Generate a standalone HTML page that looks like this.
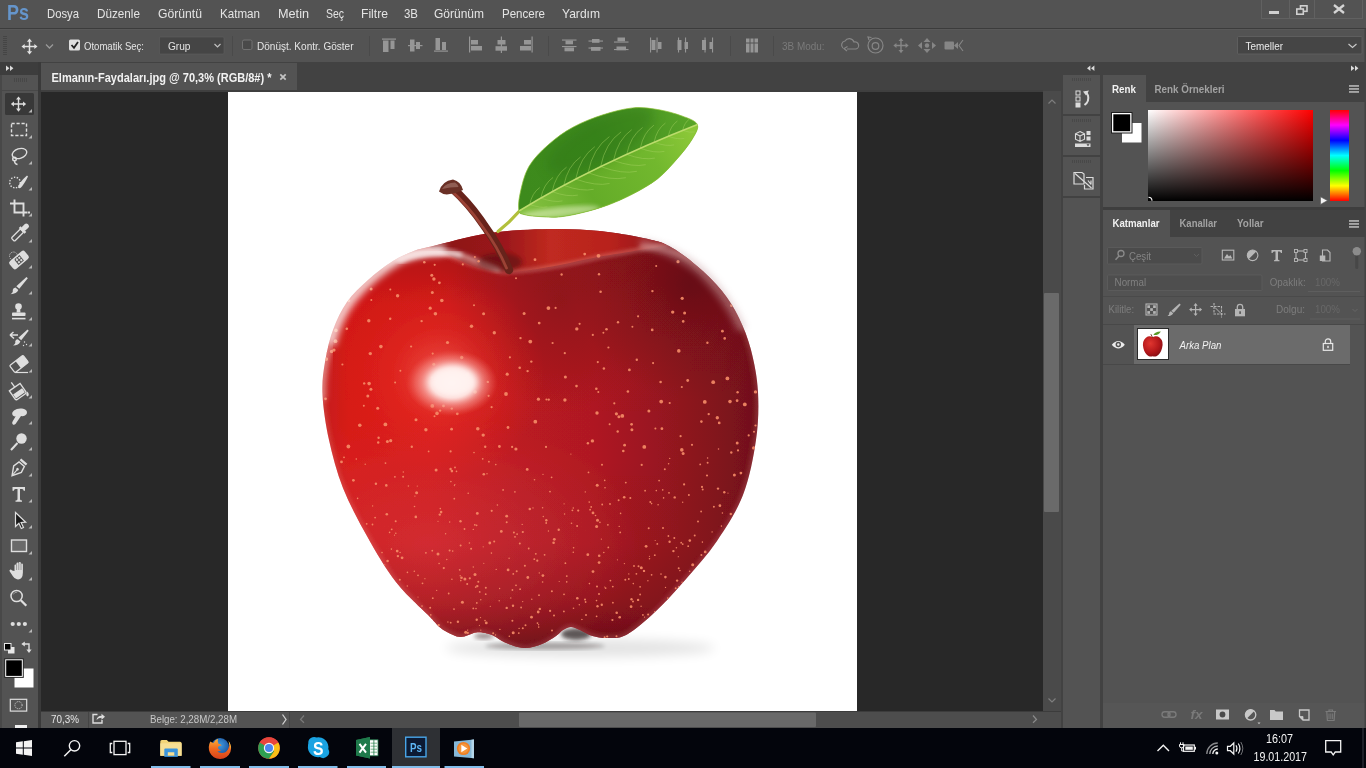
<!DOCTYPE html>
<html><head><meta charset="utf-8">
<style>
*{box-sizing:border-box;margin:0;padding:0}
html,body{width:1366px;height:768px;overflow:hidden;background:#535353;font-family:"Liberation Sans",sans-serif;color:#ddd;font-size:12px}
.abs{position:absolute}
svg{position:absolute;overflow:visible;will-change:transform}
svg text{font-family:"Liberation Sans",sans-serif}
#menubar{left:0;top:0;width:1366px;height:28px;background:#535353}
#optbar{left:0;top:28px;width:1366px;height:34px;background:#535353;border-top:1px solid #3c3c3c;box-shadow:inset 0 1px 0 #595959}
#tabbar{left:38px;top:62px;width:1023px;height:29px;background:#424242}
#tab{left:41px;top:63px;width:256px;height:27px;background:#535353}
#canvasbg{left:41px;top:90px;width:1002px;height:621px;background:#282828;border-top:2px solid #3f3f3f}
#doc{left:228px;top:92px;width:629px;height:619px;background:#fff;overflow:hidden}
#tools{left:0;top:62px;width:38px;height:666px;background:#535353}
#statusbar{left:41px;top:711px;width:1020px;height:17px;background:#535353}
#taskbar{left:0;top:728px;width:1366px;height:40px;background:#04070f}
#vscroll{left:1043px;top:91px;width:18px;height:620px;background:#4a4a4a}
#dock{left:1061px;top:62px;width:305px;height:666px;background:#424242}
#iconcol{left:1063px;top:75px;width:37px;height:653px;background:#535353}
#rpanel{left:1103px;top:75px;width:263px;height:653px;background:#535353}
</style></head><body>
<div class="abs" id="tabbar"></div>
<div class="abs" id="tab"></div>
<div class="abs" id="canvasbg"></div>
<div class="abs" id="doc"></div>
<div class="abs" id="tools"></div>
<div class="abs" id="statusbar"></div>
<div class="abs" id="vscroll"></div>
<div class="abs" id="dock"></div>
<div class="abs" id="iconcol"></div>
<div class="abs" id="rpanel"></div>
<div class="abs" id="taskbar"></div>
<div class="abs" id="optbar"></div>
<div class="abs" id="menubar"><svg style="left:0;top:0" width="1366" height="28"><text x="7" y="19.6" font-size="22" fill="#6595cb" font-weight="bold" font-style="normal" textLength="22" lengthAdjust="spacingAndGlyphs">Ps</text><text x="47" y="18" font-size="13" fill="#e4e4e4" font-weight="normal" font-style="normal" textLength="32" lengthAdjust="spacingAndGlyphs">Dosya</text><text x="97" y="18" font-size="13" fill="#e4e4e4" font-weight="normal" font-style="normal" textLength="43" lengthAdjust="spacingAndGlyphs">Düzenle</text><text x="158" y="18" font-size="13" fill="#e4e4e4" font-weight="normal" font-style="normal" textLength="44" lengthAdjust="spacingAndGlyphs">Görüntü</text><text x="220" y="18" font-size="13" fill="#e4e4e4" font-weight="normal" font-style="normal" textLength="40" lengthAdjust="spacingAndGlyphs">Katman</text><text x="278" y="18" font-size="13" fill="#e4e4e4" font-weight="normal" font-style="normal" textLength="31" lengthAdjust="spacingAndGlyphs">Metin</text><text x="326" y="18" font-size="13" fill="#e4e4e4" font-weight="normal" font-style="normal" textLength="18" lengthAdjust="spacingAndGlyphs">Seç</text><text x="361" y="18" font-size="13" fill="#e4e4e4" font-weight="normal" font-style="normal" textLength="27" lengthAdjust="spacingAndGlyphs">Filtre</text><text x="404" y="18" font-size="13" fill="#e4e4e4" font-weight="normal" font-style="normal" textLength="14" lengthAdjust="spacingAndGlyphs">3B</text><text x="434" y="18" font-size="13" fill="#e4e4e4" font-weight="normal" font-style="normal" textLength="50" lengthAdjust="spacingAndGlyphs">Görünüm</text><text x="502" y="18" font-size="13" fill="#e4e4e4" font-weight="normal" font-style="normal" textLength="43" lengthAdjust="spacingAndGlyphs">Pencere</text><text x="562" y="18" font-size="13" fill="#e4e4e4" font-weight="normal" font-style="normal" textLength="38" lengthAdjust="spacingAndGlyphs">Yardım</text></svg>
<div class="abs" style="left:1261px;top:0;width:102px;height:19px;border:1px solid #616161;border-top:0"></div>
<div class="abs" style="left:1289px;top:0;width:1px;height:18px;background:#616161"></div>
<div class="abs" style="left:1314px;top:0;width:1px;height:18px;background:#616161"></div>
<div class="abs" style="left:1269px;top:11px;width:10px;height:3px;background:#cfcfcf"></div>
<svg style="left:1295px;top:4px" width="14" height="12" viewBox="0 0 14 12"><rect x="5.5" y="1.8" width="6.5" height="5.5" fill="none" stroke="#cfcfcf" stroke-width="1.6"/><rect x="1.8" y="5" width="6.5" height="5.2" fill="#535353" stroke="#cfcfcf" stroke-width="1.6"/></svg>
<svg style="left:1332px;top:4px" width="14" height="10" viewBox="0 0 14 10"><path d="M2 1 L12 9 M12 1 L2 9" stroke="#d4d4d4" stroke-width="2.3" fill="none"/></svg>
</div><svg style="left:0;top:0" width="1366" height="62"><rect x="3" y="36" width="4" height="1" fill="#454545"/><rect x="3" y="38" width="4" height="1" fill="#454545"/><rect x="3" y="40" width="4" height="1" fill="#454545"/><rect x="3" y="42" width="4" height="1" fill="#454545"/><rect x="3" y="44" width="4" height="1" fill="#454545"/><rect x="3" y="46" width="4" height="1" fill="#454545"/><rect x="3" y="48" width="4" height="1" fill="#454545"/><rect x="3" y="50" width="4" height="1" fill="#454545"/><rect x="3" y="52" width="4" height="1" fill="#454545"/><rect x="3" y="54" width="4" height="1" fill="#454545"/><path d="M23.0,46.5 H36.0 M29.5,40.0 V53.0" stroke="#e2e2e2" stroke-width="1.5" fill="none"/><polygon points="37.5,46.5 34.3,43.9 34.3,49.1" fill="#e2e2e2"/><polygon points="21.5,46.5 24.7,43.9 24.7,49.1" fill="#e2e2e2"/><polygon points="29.5,54.5 26.9,51.3 32.1,51.3" fill="#e2e2e2"/><polygon points="29.5,38.5 26.9,41.7 32.1,41.7" fill="#e2e2e2"/><path d="M46,44.5 L49.5,48 L53,44.5" stroke="#9a9a9a" stroke-width="1.3" fill="none"/><rect x="69" y="39.5" width="11" height="11" rx="1.5" fill="#dedede"/><path d="M71.5,45 L74,47.8 L78,42" stroke="#222" stroke-width="1.8" fill="none"/><text x="84" y="49.8" font-size="11.5" fill="#e4e4e4" font-weight="normal" font-style="normal" textLength="60" lengthAdjust="spacingAndGlyphs">Otomatik Seç:</text><rect x="159.5" y="37" width="64.5" height="17" rx="1" fill="#454545" stroke="#606060" stroke-width="0.6"/><text x="168" y="49.8" font-size="11.5" fill="#e4e4e4" font-weight="normal" font-style="normal" textLength="22.5" lengthAdjust="spacingAndGlyphs">Grup</text><path d="M214.5,44 L217.5,47 L220.5,44" stroke="#c0c0c0" stroke-width="1.2" fill="none"/><rect x="232" y="36" width="1" height="20" fill="#4a4a4a"/><rect x="242.5" y="40" width="9.5" height="9.5" rx="1.5" fill="#4a4a4a" stroke="#727272" stroke-width="1"/><text x="257" y="49.8" font-size="11.5" fill="#e4e4e4" font-weight="normal" font-style="normal" textLength="96.5" lengthAdjust="spacingAndGlyphs">Dönüşt. Kontr. Göster</text><rect x="369" y="36" width="1" height="20" fill="#4a4a4a"/><rect x="382" y="38.5" width="14" height="1.2" fill="#969696"/><rect x="383" y="40.5" width="5.5" height="11.5" fill="#969696"/><rect x="390.5" y="40.5" width="4" height="8.5" fill="#969696"/><rect x="408" y="45" width="14.5" height="1.2" fill="#969696"/><rect x="410" y="39.5" width="4.5" height="12" fill="#969696"/><rect x="416" y="42" width="4" height="7" fill="#969696"/><rect x="434" y="50.5" width="14" height="1.2" fill="#969696"/><rect x="435.5" y="38" width="4.5" height="12" fill="#969696"/><rect x="442" y="42" width="4" height="8" fill="#969696"/><rect x="469" y="36.5" width="1.2" height="16" fill="#969696"/><rect x="471" y="40" width="7" height="4.5" fill="#969696"/><rect x="471" y="46" width="11" height="4.5" fill="#969696"/><rect x="500.8" y="36.5" width="1.2" height="16.5" fill="#969696"/><rect x="497.5" y="40" width="8" height="4.5" fill="#969696"/><rect x="495.5" y="46.2" width="11.5" height="4.5" fill="#969696"/><rect x="531.5" y="36.5" width="1.2" height="16" fill="#969696"/><rect x="524" y="40" width="7" height="4.5" fill="#969696"/><rect x="520" y="46" width="11" height="4.5" fill="#969696"/><rect x="548" y="36" width="1" height="20" fill="#4a4a4a"/><rect x="562" y="39.5" width="14.5" height="1.1" fill="#969696"/><rect x="562" y="46.0" width="14.5" height="1.1" fill="#969696"/><rect x="565.5" y="40.5" width="7.5" height="3.8" fill="#969696"/><rect x="564.5" y="47.5" width="9.5" height="3.8" fill="#969696"/><rect x="588.5" y="40.5" width="14.5" height="1.1" fill="#969696"/><rect x="588.5" y="47.5" width="14.5" height="1.1" fill="#969696"/><rect x="592.0" y="39.0" width="7.5" height="3.8" fill="#969696"/><rect x="591.0" y="47.0" width="9.5" height="3.8" fill="#969696"/><rect x="614" y="41.5" width="14.5" height="1.1" fill="#969696"/><rect x="614" y="49.0" width="14.5" height="1.1" fill="#969696"/><rect x="617.5" y="37.5" width="7.5" height="3.8" fill="#969696"/><rect x="616.5" y="46.5" width="9.5" height="3.8" fill="#969696"/><rect x="650" y="37.5" width="1.1" height="15" fill="#969696"/><rect x="656.5" y="37.5" width="1.1" height="15" fill="#969696"/><rect x="651.5" y="40" width="4" height="10" fill="#969696"/><rect x="658.0" y="42" width="3.5" height="7" fill="#969696"/><rect x="678" y="37.5" width="1.1" height="15" fill="#969696"/><rect x="685.0" y="37.5" width="1.1" height="15" fill="#969696"/><rect x="677.5" y="40" width="4" height="10" fill="#969696"/><rect x="684.5" y="42" width="3.5" height="7" fill="#969696"/><rect x="704.5" y="37.5" width="1.1" height="15" fill="#969696"/><rect x="712.0" y="37.5" width="1.1" height="15" fill="#969696"/><rect x="702.0" y="40" width="4" height="10" fill="#969696"/><rect x="709.5" y="42" width="3.5" height="7" fill="#969696"/><rect x="730" y="36" width="1" height="20" fill="#4a4a4a"/><rect x="746" y="38.5" width="3.5" height="4" fill="#969696"/><rect x="750.5" y="38.5" width="3" height="4" fill="#969696"/><rect x="754.5" y="38.5" width="3.5" height="4" fill="#969696"/><rect x="746" y="43.5" width="3.5" height="9" fill="#969696"/><rect x="750.5" y="43.5" width="3" height="9" fill="#969696"/><rect x="754.5" y="43.5" width="3.5" height="9" fill="#969696"/><rect x="773" y="36" width="1" height="20" fill="#4a4a4a"/><text x="782" y="50" font-size="11.5" fill="#7a7a7a" font-weight="normal" font-style="normal" textLength="42.5" lengthAdjust="spacingAndGlyphs">3B Modu:</text><g fill="none" stroke="#868686" stroke-width="1.2"><path d="M843,48 a4,4 0 0 1 2,-7 a5,5 0 0 1 9,1 a3.5,3.5 0 0 1 2,7 h-9"/><path d="M847,51 l-3,-2.5 l3.5,-2"/><circle cx="875.5" cy="45.5" r="7.5"/><circle cx="875.5" cy="46" r="3.3"/><path d="M869,40 l-1,-3 l3.5,0.5"/></g><path d="M894.875,45.5 H907.125 M901,39.375 V51.625" stroke="#868686" stroke-width="1.4249999999999998" fill="none"/><polygon points="908.625,45.5 905.585,43.03 905.585,47.97" fill="#868686"/><polygon points="893.375,45.5 896.415,43.03 896.415,47.97" fill="#868686"/><polygon points="901.0,53.125 898.53,50.085 903.47,50.085" fill="#868686"/><polygon points="901.0,37.875 898.53,40.915 903.47,40.915" fill="#868686"/><g fill="#868686"><polygon points="927,38 930.5,42 923.5,42"/><polygon points="927,53 930.5,49 923.5,49"/><polygon points="918,45.5 922,42 922,49"/><polygon points="936,45.5 932,42 932,49"/><circle cx="927" cy="45.5" r="2.2"/></g><rect x="944.5" y="41.5" width="9.5" height="8" rx="1" fill="#868686"/><polygon points="954,45.5 958,42 958,49" fill="#868686"/><path d="M963,40 l-4,5.5 l4,5.5" stroke="#868686" stroke-width="1.1" fill="none"/><rect x="1237.5" y="36.5" width="124.5" height="17.5" rx="1" fill="#454545" stroke="#636363" stroke-width="0.8"/><text x="1245.5" y="49.5" font-size="11.5" fill="#eaeaea" font-weight="normal" font-style="normal" textLength="37.5" lengthAdjust="spacingAndGlyphs">Temeller</text><path d="M1348.5,44 L1352.5,47.5 L1356.5,44" stroke="#c8c8c8" stroke-width="1.2" fill="none"/></svg><svg style="left:0;top:0" width="41" height="728"><rect x="0" y="62" width="38" height="13" fill="#3d3d3d"/><rect x="0" y="75" width="2" height="653" fill="#484848"/><rect x="38" y="62" width="3" height="666" fill="#3a3a3a"/><polygon points="9.4,68.3 6,65.5 6,71.1" fill="#dcdcdc"/><polygon points="13.4,68.3 10,65.5 10,71.1" fill="#dcdcdc"/><rect x="14" y="78" width="1" height="4" fill="#474747"/><rect x="16" y="78" width="1" height="4" fill="#474747"/><rect x="18" y="78" width="1" height="4" fill="#474747"/><rect x="20" y="78" width="1" height="4" fill="#474747"/><rect x="22" y="78" width="1" height="4" fill="#474747"/><rect x="24" y="78" width="1" height="4" fill="#474747"/><rect x="26" y="78" width="1" height="4" fill="#474747"/><rect x="2" y="90" width="36" height="1" fill="#484848"/><rect x="5" y="93" width="29" height="22" rx="1.5" fill="#383838"/><polygon points="32,109 32,112.5 28.5,112.5" fill="#b8b8b8"/><polygon points="32,135 32,138.5 28.5,138.5" fill="#b8b8b8"/><polygon points="32,161 32,164.5 28.5,164.5" fill="#b8b8b8"/><polygon points="32,187 32,190.5 28.5,190.5" fill="#b8b8b8"/><polygon points="32,213 32,216.5 28.5,216.5" fill="#b8b8b8"/><polygon points="32,239 32,242.5 28.5,242.5" fill="#b8b8b8"/><polygon points="32,265 32,268.5 28.5,268.5" fill="#b8b8b8"/><polygon points="32,291 32,294.5 28.5,294.5" fill="#b8b8b8"/><polygon points="32,317 32,320.5 28.5,320.5" fill="#b8b8b8"/><polygon points="32,343 32,346.5 28.5,346.5" fill="#b8b8b8"/><polygon points="32,369 32,372.5 28.5,372.5" fill="#b8b8b8"/><polygon points="32,395 32,398.5 28.5,398.5" fill="#b8b8b8"/><polygon points="32,421 32,424.5 28.5,424.5" fill="#b8b8b8"/><polygon points="32,447 32,450.5 28.5,450.5" fill="#b8b8b8"/><polygon points="32,473 32,476.5 28.5,476.5" fill="#b8b8b8"/><polygon points="32,499 32,502.5 28.5,502.5" fill="#b8b8b8"/><polygon points="32,525 32,528.5 28.5,528.5" fill="#b8b8b8"/><polygon points="32,551 32,554.5 28.5,554.5" fill="#b8b8b8"/><polygon points="32,577 32,580.5 28.5,580.5" fill="#b8b8b8"/><polygon points="32,629 32,632.5 28.5,632.5" fill="#b8b8b8"/><path d="M12.375,104 H24.625 M18.5,97.875 V110.125" stroke="#dedede" stroke-width="1.4249999999999998" fill="none"/><polygon points="26.125,104.0 23.085,101.53 23.085,106.47" fill="#dedede"/><polygon points="10.875,104.0 13.915,101.53 13.915,106.47" fill="#dedede"/><polygon points="18.5,111.625 16.03,108.585 20.97,108.585" fill="#dedede"/><polygon points="18.5,96.375 16.03,99.415 20.97,99.415" fill="#dedede"/><rect x="11.5" y="123.5" width="15" height="12" fill="none" stroke="#dedede" stroke-width="1.4" stroke-dasharray="3.2,1.8"/><g fill="none" stroke="#dedede" stroke-width="1.4"><ellipse cx="19.5" cy="153.5" rx="7.5" ry="4.8" transform="rotate(-18 19.5 153.5)"/><circle cx="14.5" cy="159" r="1.8"/><path d="M14.5,161 q0,3 3,3.5"/></g><circle cx="15" cy="182.500" r="5.3" fill="none" stroke="#dedede" stroke-width="1.4" stroke-dasharray="1.4,1.5"/><path d="M18,187.500 q1,-5 9,-12 l1,1 q-4,8 -7,11 q-1.500,1.500 -3,0z" fill="#dedede"/><path d="M14.500,199.500 V212.500 H27.500 M10,203.500 H23.500 V216.500" stroke="#dedede" stroke-width="1.9" fill="none"/><rect x="28" y="211.500" width="2" height="2" fill="#dedede"/><g transform="rotate(45 18.5 234)"><rect x="16.2" y="229" width="4.6" height="13" rx="1.2" fill="none" stroke="#dedede" stroke-width="1.3"/><rect x="14.5" y="227" width="8" height="2.6" fill="#dedede"/><rect x="16" y="220.500" width="5" height="7.500" rx="2" fill="#dedede"/></g><g transform="rotate(-40 19 260)"><rect x="9" y="255" width="20" height="10" rx="2.5" fill="#dedede"/><rect x="15.500" y="256.500" width="7" height="7" fill="#535353"/><rect x="16.6" y="257.600" width="2" height="2" fill="#dedede"/><rect x="19.6" y="257.600" width="2" height="2" fill="#dedede"/><rect x="16.6" y="260.600" width="2" height="2" fill="#dedede"/><rect x="19.6" y="260.600" width="2" height="2" fill="#dedede"/></g><circle cx="13.500" cy="256" r="4" fill="none" stroke="#dedede" stroke-width="1" stroke-dasharray="1,1.300"/><path d="M26.500,277 l1.300,1.300 l-8.500,10.500 l-3,-2.600z" fill="#dedede"/><path d="M15.500,287.500 l2.800,2.500 q-1.500,4 -7.800,4.200 q3,-2 2.200,-4.200 q0.500,-2.500 2.800,-2.500z" fill="#dedede"/><circle cx="18.500" cy="306.500" r="3.300" fill="#dedede"/><path d="M17,308 h3 l0.500,4.500 h-4z" fill="#dedede"/><rect x="12" y="312.500" width="13.500" height="3.600" rx="0.800" fill="#dedede"/><rect x="12" y="317.800" width="13.500" height="1.600" fill="#dedede"/><path d="M27.500,329.500 l1.200,1.200 l-7.500,9.500 l-2.800,-2.400z" fill="#dedede"/><path d="M17.800,339.300 l2.600,2.300 q-1.500,3.800 -7.400,4 q3,-2 2.200,-4 q0.400,-2.300 2.600,-2.300z" fill="#dedede"/><path d="M10,335 h8 M10,335 l3.500,-3 M14,338.500 l-4,-3.500" stroke="#dedede" stroke-width="1.500" fill="none"/><circle cx="24.500" cy="342" r="0.700" fill="#dedede"/><circle cx="26.500" cy="344.500" r="0.700" fill="#dedede"/><circle cx="23.500" cy="345.500" r="0.700" fill="#dedede"/><g transform="rotate(-38 19 364)"><rect x="10.500" y="359.500" width="17" height="9" rx="1.200" fill="none" stroke="#dedede" stroke-width="1.300"/><rect x="18" y="359.500" width="9.500" height="9" fill="#dedede"/></g><path d="M15,372.500 h13" stroke="#dedede" stroke-width="1.200"/><g transform="rotate(-35 18 391)"><path d="M11,386 h13 v10 q0,1.500 -1.500,1.500 h-10 q-1.500,0 -1.500,-1.500z" fill="none" stroke="#dedede" stroke-width="1.400"/><path d="M12,391 h11 v5 h-11z" fill="#dedede"/><path d="M17.500,386 v-6" stroke="#dedede" stroke-width="1.300"/></g><path d="M27.500,391.500 q2.500,3.500 0,5 q-2.500,-1.500 0,-5z" fill="#dedede"/><path d="M14,410.500 q3,-2.500 8,-2 q4.500,0.500 5,3.500 q0.300,2.500 -2,3.500 q-2,1 -4,0.500 l-5.500,8 q-1.500,1.500 -2.800,0.300 q-1.200,-1.200 0,-3 l3,-5 q-2,0.500 -3,-1 q-1.500,-2.500 1.300,-4.800z" fill="#dedede"/><circle cx="21.500" cy="438.500" r="5.200" fill="#dedede"/><path d="M17.500,443 l-6.500,7" stroke="#dedede" stroke-width="2"/><g transform="rotate(40 18.5 468)"><path d="M18.500,478 l-5,-8.500 l1.500,-6.500 h7 l1.500,6.500z" fill="none" stroke="#dedede" stroke-width="1.400"/><path d="M18.500,477 v-7" stroke="#dedede" stroke-width="1.100"/><circle cx="18.500" cy="469.500" r="1.300" fill="#dedede"/><rect x="14.500" y="459" width="8" height="2.400" fill="#dedede"/></g><path d="M12.500,487 h12.500 v3.800 h-1.300 q-0.200,-1.900 -1.700,-1.900 h-2 v10.300 q0,1.200 2,1.300 v1.300 h-6.500 v-1.300 q2,-0.100 2,-1.300 v-10.300 h-2 q-1.500,0 -1.700,1.900 h-1.300z" fill="#dedede"/><path d="M15.500,512.500 l0,14 l3.400,-3.200 l2.400,5.200 l2.200,-1 l-2.400,-5 l4.600,-0.300z" fill="#1a1a1a" stroke="#dedede" stroke-width="1.200"/><rect x="11.500" y="540" width="15" height="11.500" fill="#6a6a6a" stroke="#dedede" stroke-width="1.400"/><path d="M14.500,571 v-5.500 q0,-1 1,-1 q1,0 1,1 v-2 q0,-1 1.100,-1 q1.100,0 1.100,1 v-0.500 q0,-1 1.100,-1 q1.100,0 1.100,1 v1.500 q0,-1 1,-1 q1,0 1,1 v8 q0,3.500 -1.500,5.500 q-1.500,1.800 -4.500,1.300 q-2.500,-0.500 -4,-3 l-3.300,-5 q-0.500,-1.200 0.500,-1.600 q1,-0.400 2,0.800z" fill="#dedede"/><path d="M16.600,565 v5 M18.800,563 v7 M21,563.500 v6.500" stroke="#535353" stroke-width="0.500"/><circle cx="16.600" cy="596" r="5.600" fill="none" stroke="#dedede" stroke-width="1.500"/><path d="M20.800,600.300 l5.500,5.500" stroke="#dedede" stroke-width="2.300"/><path d="M13.200,594.500 q1.200,-2.600 4,-2.300" stroke="#a0a0a0" stroke-width="0.900" fill="none"/><circle cx="12.7" cy="624" r="2.100" fill="#dedede"/><circle cx="18.8" cy="624" r="2.100" fill="#dedede"/><circle cx="24.9" cy="624" r="2.100" fill="#dedede"/><rect x="8" y="647" width="6.500" height="6.500" fill="#e8e8e8"/><rect x="4.500" y="643.500" width="6.500" height="6.500" fill="#000" stroke="#e8e8e8" stroke-width="1"/><path d="M24,644 h5 v6.500" stroke="#dedede" stroke-width="1.400" fill="none"/><polygon points="21.300,644 24.800,641.400 24.800,646.600" fill="#dedede"/><polygon points="29,653 26.400,649.600 31.600,649.600" fill="#dedede"/><rect x="14.500" y="668.500" width="19" height="19" fill="#fff"/><rect x="4.200" y="658.300" width="19.600" height="19.600" fill="#2a2a2a"/><rect x="5.200" y="659.300" width="17.600" height="17.600" fill="#fff"/><rect x="6.200" y="660.300" width="15.600" height="15.600" fill="#000"/><rect x="10.300" y="699.300" width="16.400" height="11.800" fill="none" stroke="#dedede" stroke-width="1.200"/><circle cx="18.500" cy="705.200" r="3.600" fill="none" stroke="#dedede" stroke-width="1" stroke-dasharray="1,1.100"/><rect x="15" y="725" width="12" height="3" fill="#f0f0f0"/></svg><svg style="left:0;top:0" width="1366" height="728"><text x="51.5" y="82" font-size="12" fill="#f2f2f2" font-weight="bold" font-style="normal" textLength="220" lengthAdjust="spacingAndGlyphs">Elmanın-Faydaları.jpg @ 70,3% (RGB/8#) *</text><path d="M280.300,74.300 L285.700,79.700 M285.700,74.300 L280.300,79.700" stroke="#c4c4c4" stroke-width="1.700"/><rect x="1044" y="293" width="15" height="219" rx="1" fill="#6a6a6a"/><path d="M1048.500,103.500 L1052,100 L1055.500,103.500" stroke="#7e7e7e" stroke-width="1.200" fill="none"/><path d="M1048.500,698.500 L1052,702 L1055.500,698.500" stroke="#7e7e7e" stroke-width="1.200" fill="none"/><rect x="41" y="711" width="1020" height="1" fill="#3c3c3c"/><rect x="290" y="712" width="771" height="16" fill="#4d4d4d"/><rect x="519" y="712.500" width="297" height="14.500" rx="1" fill="#696969"/><text x="51" y="722.7" font-size="11.5" fill="#e4e4e4" font-weight="normal" font-style="normal" textLength="28" lengthAdjust="spacingAndGlyphs">70,3%</text><rect x="88" y="712" width="1" height="16" fill="#454545"/><rect x="289" y="712" width="1" height="16" fill="#454545"/><path d="M97.500,714.500 H93 V723 H102 V720" stroke="#dcdcdc" stroke-width="1.400" fill="none"/><path d="M96.500,720 q0.500,-4 5,-4.200 v-2 l3.500,3 l-3.500,3 v-2 q-3,0 -5,2.200z" fill="#dcdcdc"/><text x="150" y="722.7" font-size="11" fill="#c8c8c8" font-weight="normal" font-style="normal" textLength="87" lengthAdjust="spacingAndGlyphs">Belge: 2,28M/2,28M</text><path d="M282.500,714.500 L286,719.500 L282.500,724.500" stroke="#d0d0d0" stroke-width="1.300" fill="none"/><path d="M304,715.500 L300.500,719.500 L304,722.700" stroke="#7a7a7a" stroke-width="1.200" fill="none"/><path d="M1033,715.500 L1036.500,719.500 L1033,722.700" stroke="#8a8a8a" stroke-width="1.200" fill="none"/></svg><svg style="left:228px;top:92px" width="629" height="619" viewBox="228 92 629 619"><defs>
<linearGradient id="abase" x1="323" y1="0" x2="760" y2="0" gradientUnits="userSpaceOnUse">
<stop offset="0" stop-color="#c8201e"/><stop offset="0.06" stop-color="#d81a16"/><stop offset="0.25" stop-color="#d41a18"/><stop offset="0.45" stop-color="#bb1a20"/><stop offset="0.62" stop-color="#b01921"/><stop offset="0.76" stop-color="#9a1720"/><stop offset="0.88" stop-color="#86141e"/><stop offset="1" stop-color="#70101a"/></linearGradient>
<linearGradient id="avert" x1="0" y1="229" x2="0" y2="648" gradientUnits="userSpaceOnUse">
<stop offset="0" stop-color="#5a0a10" stop-opacity="0.350"/><stop offset="0.18" stop-color="#5a0a10" stop-opacity="0.050"/><stop offset="0.55" stop-color="#5a0a10" stop-opacity="0"/><stop offset="0.75" stop-color="#640c16" stop-opacity="0.080"/><stop offset="0.88" stop-color="#640c16" stop-opacity="0.380"/><stop offset="1" stop-color="#500a14" stop-opacity="0.750"/></linearGradient>
<radialGradient id="adark" cx="690" cy="285" r="115" gradientUnits="userSpaceOnUse"><stop offset="0" stop-color="#5e0c13" stop-opacity="0.750"/><stop offset="0.6" stop-color="#6a0e15" stop-opacity="0.300"/><stop offset="1" stop-color="#6a0e15" stop-opacity="0"/></radialGradient>
<radialGradient id="adark2" cx="560" cy="300" r="110" gradientUnits="userSpaceOnUse"><stop offset="0" stop-color="#7a1016" stop-opacity="0.550"/><stop offset="1" stop-color="#7a1016" stop-opacity="0"/></radialGradient>
<radialGradient id="aglow" cx="440" cy="375" r="105" gradientUnits="userSpaceOnUse"><stop offset="0" stop-color="#ff6a60" stop-opacity="0.700"/><stop offset="0.45" stop-color="#f03228" stop-opacity="0.450"/><stop offset="1" stop-color="#e8201a" stop-opacity="0"/></radialGradient>
<radialGradient id="ahl" cx="452" cy="383" r="46" gradientUnits="userSpaceOnUse" gradientTransform="translate(452 383) scale(1 0.720) translate(-452 -383)"><stop offset="0" stop-color="#fff4f2" stop-opacity="1"/><stop offset="0.45" stop-color="#ffe0dc" stop-opacity="0.900"/><stop offset="0.8" stop-color="#f89890" stop-opacity="0.400"/><stop offset="1" stop-color="#f06a60" stop-opacity="0"/></radialGradient>
<radialGradient id="apink" cx="430" cy="545" r="210" gradientUnits="userSpaceOnUse" gradientTransform="translate(430 545) scale(1 0.620) translate(-430 -545)"><stop offset="0" stop-color="#dc4a5a" stop-opacity="0.380"/><stop offset="0.5" stop-color="#d44454" stop-opacity="0.250"/><stop offset="1" stop-color="#d04050" stop-opacity="0"/></radialGradient>
<linearGradient id="acav" x1="433" y1="0" x2="668" y2="0" gradientUnits="userSpaceOnUse"><stop offset="0" stop-color="#8a1418"/><stop offset="0.3" stop-color="#9a171a"/><stop offset="0.5" stop-color="#c02a20"/><stop offset="0.75" stop-color="#b8221e"/><stop offset="1" stop-color="#8c1319"/></linearGradient>
<linearGradient id="aleaf" x1="525" y1="200" x2="690" y2="115" gradientUnits="userSpaceOnUse"><stop offset="0" stop-color="#3d8a1c"/><stop offset="0.5" stop-color="#3f8c1e"/><stop offset="1" stop-color="#58a428"/></linearGradient>
<linearGradient id="aleafL" x1="530" y1="215" x2="690" y2="130" gradientUnits="userSpaceOnUse"><stop offset="0" stop-color="#84c040"/><stop offset="0.35" stop-color="#64ac28"/><stop offset="0.75" stop-color="#72b82e"/><stop offset="1" stop-color="#8cc838"/></linearGradient>
<linearGradient id="aleaf2" x1="600" y1="120" x2="630" y2="200" gradientUnits="userSpaceOnUse"><stop offset="0" stop-color="#86c03c" stop-opacity="0.550"/><stop offset="0.5" stop-color="#5aa024" stop-opacity="0"/><stop offset="1" stop-color="#2f7a16" stop-opacity="0.500"/></linearGradient>
<linearGradient id="astem" x1="0" y1="0" x2="1" y2="0"><stop offset="0" stop-color="#b04a34"/><stop offset="0.5" stop-color="#7a2a1c"/><stop offset="1" stop-color="#4a1810"/></linearGradient>
<filter id="ab2" x="-20%" y="-20%" width="140%" height="140%"><feGaussianBlur stdDeviation="2"/></filter>
<filter id="ab6" x="-30%" y="-100%" width="160%" height="300%"><feGaussianBlur stdDeviation="6"/></filter>
<filter id="ab3" x="-30%" y="-30%" width="160%" height="160%"><feGaussianBlur stdDeviation="3.500"/></filter>
<filter id="ab8" x="-10%" y="-10%" width="120%" height="120%"><feGaussianBlur stdDeviation="9"/></filter>
<filter id="ab1" x="-5%" y="-5%" width="110%" height="110%"><feGaussianBlur stdDeviation="0.700"/></filter>
<clipPath id="aclip"><path d="M433.0,246.0 C445.7,243.0 470.5,235.8 490.0,233.0 C509.5,230.2 531.7,229.3 550.0,229.0 C568.3,228.7 584.5,229.5 600.0,231.0 C615.5,232.5 631.5,235.5 643.0,238.0 C654.5,240.5 660.0,241.3 669.0,246.0 C678.0,250.7 688.2,258.5 697.0,266.0 C705.8,273.5 715.0,282.3 722.0,291.0 C729.0,299.7 734.2,308.2 739.0,318.0 C743.8,327.8 747.8,337.7 751.0,350.0 C754.2,362.3 757.2,377.0 758.0,392.0 C758.8,407.0 758.5,422.8 756.0,440.0 C753.5,457.2 749.5,478.2 743.0,495.0 C736.5,511.8 726.5,527.0 717.0,541.0 C707.5,555.0 696.2,567.3 686.0,579.0 C675.8,590.7 665.8,601.8 656.0,611.0 C646.2,620.2 635.0,630.0 627.0,634.5 C619.0,639.0 613.8,637.8 608.0,638.0 C602.2,638.2 597.2,637.3 592.5,636.0 C587.8,634.7 583.6,631.5 580.0,630.0 C576.4,628.5 573.8,627.0 571.0,627.0 C568.2,627.0 565.5,628.5 563.0,630.0 C560.5,631.5 559.5,633.7 556.0,636.0 C552.5,638.3 547.3,642.0 542.0,644.0 C536.7,646.0 530.2,648.2 524.0,648.0 C517.8,647.8 510.0,644.5 505.0,642.5 C500.0,640.5 497.0,637.5 494.0,636.0 C491.0,634.5 490.0,634.1 487.0,633.5 C484.0,632.9 480.4,631.9 476.0,632.5 C471.6,633.1 465.3,637.1 460.5,637.0 C455.7,636.9 450.5,633.7 447.0,632.0 C443.5,630.3 442.3,629.5 439.5,627.0 C436.7,624.5 437.2,624.5 430.0,617.0 C422.8,609.5 406.5,595.5 396.0,582.0 C385.5,568.5 375.8,551.7 367.0,536.0 C358.2,520.3 349.3,504.0 343.0,488.0 C336.7,472.0 332.4,455.5 329.0,440.0 C325.6,424.5 323.2,408.0 322.5,395.0 C321.8,382.0 323.2,372.8 325.0,362.0 C326.8,351.2 329.3,340.0 333.0,330.0 C336.7,320.0 341.2,310.3 347.0,302.0 C352.8,293.7 360.3,286.8 368.0,280.0 C375.7,273.2 385.3,265.8 393.0,261.0 C400.7,256.2 407.3,253.5 414.0,251.0 C420.7,248.5 420.3,249.0 433.0,246.0Z"/></clipPath>
</defs><ellipse cx="580" cy="648" rx="135" ry="9" fill="#000" opacity="0.110" filter="url(#ab6)"/><ellipse cx="545" cy="646" rx="60" ry="3.500" fill="#100" opacity="0.300" filter="url(#ab2)"/><ellipse cx="576" cy="634" rx="15" ry="6" fill="#2a2020" opacity="0.750" filter="url(#ab2)"/><ellipse cx="484" cy="636" rx="10" ry="3" fill="#2a1010" opacity="0.450" filter="url(#ab2)"/><g filter="url(#ab1)"><path d="M433.0,246.0 C445.7,243.0 470.5,235.8 490.0,233.0 C509.5,230.2 531.7,229.3 550.0,229.0 C568.3,228.7 584.5,229.5 600.0,231.0 C615.5,232.5 631.5,235.5 643.0,238.0 C654.5,240.5 660.0,241.3 669.0,246.0 C678.0,250.7 688.2,258.5 697.0,266.0 C705.8,273.5 715.0,282.3 722.0,291.0 C729.0,299.7 734.2,308.2 739.0,318.0 C743.8,327.8 747.8,337.7 751.0,350.0 C754.2,362.3 757.2,377.0 758.0,392.0 C758.8,407.0 758.5,422.8 756.0,440.0 C753.5,457.2 749.5,478.2 743.0,495.0 C736.5,511.8 726.5,527.0 717.0,541.0 C707.5,555.0 696.2,567.3 686.0,579.0 C675.8,590.7 665.8,601.8 656.0,611.0 C646.2,620.2 635.0,630.0 627.0,634.5 C619.0,639.0 613.8,637.8 608.0,638.0 C602.2,638.2 597.2,637.3 592.5,636.0 C587.8,634.7 583.6,631.5 580.0,630.0 C576.4,628.5 573.8,627.0 571.0,627.0 C568.2,627.0 565.5,628.5 563.0,630.0 C560.5,631.5 559.5,633.7 556.0,636.0 C552.5,638.3 547.3,642.0 542.0,644.0 C536.7,646.0 530.2,648.2 524.0,648.0 C517.8,647.8 510.0,644.5 505.0,642.5 C500.0,640.5 497.0,637.5 494.0,636.0 C491.0,634.5 490.0,634.1 487.0,633.5 C484.0,632.9 480.4,631.9 476.0,632.5 C471.6,633.1 465.3,637.1 460.5,637.0 C455.7,636.9 450.5,633.7 447.0,632.0 C443.5,630.3 442.3,629.5 439.5,627.0 C436.7,624.5 437.2,624.5 430.0,617.0 C422.8,609.5 406.5,595.5 396.0,582.0 C385.5,568.5 375.8,551.7 367.0,536.0 C358.2,520.3 349.3,504.0 343.0,488.0 C336.7,472.0 332.4,455.5 329.0,440.0 C325.6,424.5 323.2,408.0 322.5,395.0 C321.8,382.0 323.2,372.8 325.0,362.0 C326.8,351.2 329.3,340.0 333.0,330.0 C336.7,320.0 341.2,310.3 347.0,302.0 C352.8,293.7 360.3,286.8 368.0,280.0 C375.7,273.2 385.3,265.8 393.0,261.0 C400.7,256.2 407.3,253.5 414.0,251.0 C420.7,248.5 420.3,249.0 433.0,246.0Z" fill="url(#abase)"/><g clip-path="url(#aclip)"><rect x="320" y="225" width="445" height="430" fill="url(#adark)"/><rect x="320" y="225" width="445" height="430" fill="url(#adark2)"/><rect x="320" y="225" width="445" height="430" fill="url(#aglow)"/><rect x="320" y="225" width="445" height="430" fill="url(#avert)"/><rect x="320" y="400" width="445" height="260" fill="url(#apink)"/><path d="M433.0,246.0 C445.7,243.0 470.5,235.8 490.0,233.0 C509.5,230.2 531.7,229.3 550.0,229.0 C568.3,228.7 584.5,229.5 600.0,231.0 C615.5,232.5 631.5,235.5 643.0,238.0 C654.5,240.5 660.0,241.3 669.0,246.0 C678.0,250.7 688.2,258.5 697.0,266.0 C705.8,273.5 715.0,282.3 722.0,291.0 C729.0,299.7 734.2,308.2 739.0,318.0 C743.8,327.8 747.8,337.7 751.0,350.0 C754.2,362.3 757.2,377.0 758.0,392.0 C758.8,407.0 758.5,422.8 756.0,440.0 C753.5,457.2 749.5,478.2 743.0,495.0 C736.5,511.8 726.5,527.0 717.0,541.0 C707.5,555.0 696.2,567.3 686.0,579.0 C675.8,590.7 665.8,601.8 656.0,611.0 C646.2,620.2 635.0,630.0 627.0,634.5 C619.0,639.0 613.8,637.8 608.0,638.0 C602.2,638.2 597.2,637.3 592.5,636.0 C587.8,634.7 583.6,631.5 580.0,630.0 C576.4,628.5 573.8,627.0 571.0,627.0 C568.2,627.0 565.5,628.5 563.0,630.0 C560.5,631.5 559.5,633.7 556.0,636.0 C552.5,638.3 547.3,642.0 542.0,644.0 C536.7,646.0 530.2,648.2 524.0,648.0 C517.8,647.8 510.0,644.5 505.0,642.5 C500.0,640.5 497.0,637.5 494.0,636.0 C491.0,634.5 490.0,634.1 487.0,633.5 C484.0,632.9 480.4,631.9 476.0,632.5 C471.6,633.1 465.3,637.1 460.5,637.0 C455.7,636.9 450.5,633.7 447.0,632.0 C443.5,630.3 442.3,629.5 439.5,627.0 C436.7,624.5 437.2,624.5 430.0,617.0 C422.8,609.5 406.5,595.5 396.0,582.0 C385.5,568.5 375.8,551.7 367.0,536.0 C358.2,520.3 349.3,504.0 343.0,488.0 C336.7,472.0 332.4,455.5 329.0,440.0 C325.6,424.5 323.2,408.0 322.5,395.0 C321.8,382.0 323.2,372.8 325.0,362.0 C326.8,351.2 329.3,340.0 333.0,330.0 C336.7,320.0 341.2,310.3 347.0,302.0 C352.8,293.7 360.3,286.8 368.0,280.0 C375.7,273.2 385.3,265.8 393.0,261.0 C400.7,256.2 407.3,253.5 414.0,251.0 C420.7,248.5 420.3,249.0 433.0,246.0Z" fill="none" stroke="#f6b0a8" stroke-width="5" opacity="0.220" filter="url(#ab2)"/><path d="M433.0,246.0 C441.3,243.0 470.5,235.8 490.0,233.0 C509.5,230.2 531.7,229.3 550.0,229.0 C568.3,228.7 584.5,229.5 600.0,231.0 C615.5,232.5 631.7,235.8 643.0,238.0 C654.3,240.2 668.5,242.0 668.0,244.0 C667.5,246.0 651.7,247.8 640.0,250.0 C628.3,252.2 611.3,254.5 598.0,257.0 C584.7,259.5 571.3,262.8 560.0,265.0 C548.7,267.2 539.7,268.8 530.0,270.0 C520.3,271.2 510.7,272.3 502.0,272.0 C493.3,271.7 485.8,270.3 478.0,268.0 C470.2,265.7 461.3,260.8 455.0,258.0 C448.7,255.2 443.7,253.0 440.0,251.0 C436.3,249.0 424.7,249.0 433.0,246.0Z" fill="url(#acav)"/><path d="M440,252 Q470,266 502,272 Q545,271 600,257 Q640,250 668,244" stroke="#f4b4a8" stroke-width="3" fill="none" opacity="0.500" filter="url(#ab2)"/><path d="M380,266 Q410,248 452,252 Q480,262 500,270" stroke="#ffe4de" stroke-width="5" fill="none" opacity="0.600" filter="url(#ab2)"/><path d="M640,246 Q690,250 725,282" stroke="#f0a8a0" stroke-width="5" fill="none" opacity="0.350" filter="url(#ab2)"/><ellipse cx="500" cy="262" rx="22" ry="9" fill="#4a0a0e" opacity="0.500" filter="url(#ab2)"/><g fill="#f68d68" opacity="0.900"><circle cx="356.3" cy="459.0" r="0.8"/><circle cx="682.2" cy="298.3" r="1.6"/><circle cx="734.4" cy="475.1" r="1.5"/><circle cx="345.1" cy="584.8" r="0.9"/><circle cx="403.1" cy="476.8" r="1.0"/><circle cx="561.6" cy="274.5" r="1.2"/><circle cx="618.9" cy="416.8" r="1.5"/><circle cx="551.9" cy="591.3" r="1.0"/><circle cx="748.4" cy="296.0" r="1.7"/><circle cx="390.7" cy="440.7" r="1.6"/><circle cx="460.5" cy="521.2" r="1.2"/><circle cx="529.8" cy="509.0" r="1.3"/><circle cx="604.6" cy="637.3" r="1.0"/><circle cx="491.7" cy="510.8" r="1.1"/><circle cx="397.6" cy="295.7" r="1.7"/><circle cx="380.9" cy="346.6" r="1.8"/><circle cx="359.8" cy="425.2" r="1.8"/><circle cx="678.9" cy="587.0" r="1.1"/><circle cx="390.2" cy="318.7" r="1.2"/><circle cx="534.5" cy="479.8" r="0.8"/><circle cx="506.0" cy="394.0" r="1.9"/><circle cx="623.3" cy="451.0" r="1.3"/><circle cx="348.3" cy="600.8" r="1.4"/><circle cx="669.7" cy="403.0" r="1.1"/><circle cx="599.0" cy="274.3" r="1.2"/><circle cx="395.1" cy="382.6" r="1.0"/><circle cx="390.3" cy="289.6" r="1.0"/><circle cx="702.7" cy="489.5" r="1.0"/><circle cx="475.1" cy="392.0" r="1.8"/><circle cx="754.0" cy="431.7" r="1.0"/><circle cx="369.1" cy="383.6" r="1.8"/><circle cx="698.0" cy="521.5" r="1.0"/><circle cx="397.2" cy="551.1" r="1.4"/><circle cx="750.5" cy="582.5" r="1.4"/><circle cx="478.6" cy="261.3" r="1.2"/><circle cx="737.6" cy="392.2" r="1.2"/><circle cx="713.9" cy="577.8" r="1.3"/><circle cx="718.0" cy="555.1" r="1.1"/><circle cx="402.1" cy="557.8" r="1.4"/><circle cx="744.8" cy="404.4" r="1.9"/><circle cx="638.1" cy="316.3" r="1.1"/><circle cx="715.9" cy="564.5" r="1.4"/><circle cx="748.5" cy="506.3" r="1.2"/><circle cx="512.4" cy="590.0" r="0.9"/><circle cx="433.8" cy="364.3" r="1.5"/><circle cx="437.0" cy="413.4" r="1.8"/><circle cx="477.8" cy="428.7" r="1.8"/><circle cx="506.7" cy="607.9" r="1.2"/><circle cx="565.4" cy="377.1" r="1.5"/><circle cx="719.2" cy="422.9" r="1.4"/><circle cx="546.3" cy="520.2" r="1.2"/><circle cx="531.5" cy="617.2" r="1.4"/><circle cx="732.5" cy="577.6" r="0.9"/><circle cx="516.0" cy="278.3" r="1.0"/><circle cx="391.7" cy="529.3" r="0.9"/><circle cx="706.4" cy="627.3" r="1.5"/><circle cx="684.6" cy="313.0" r="1.5"/><circle cx="471.5" cy="326.3" r="1.7"/><circle cx="333.4" cy="466.1" r="0.8"/><circle cx="468.2" cy="493.3" r="0.8"/><circle cx="370.3" cy="353.6" r="1.7"/><circle cx="441.8" cy="300.5" r="1.8"/><circle cx="678.8" cy="350.9" r="1.8"/><circle cx="571.5" cy="523.2" r="0.8"/><circle cx="622.3" cy="415.9" r="1.9"/><circle cx="599.1" cy="562.6" r="1.4"/><circle cx="353.8" cy="586.5" r="1.0"/><circle cx="563.9" cy="611.4" r="0.9"/><circle cx="552.6" cy="343.0" r="1.1"/><circle cx="346.8" cy="328.7" r="1.3"/><circle cx="653.1" cy="363.1" r="1.1"/><circle cx="474.9" cy="257.1" r="1.0"/><circle cx="641.7" cy="464.9" r="1.1"/><circle cx="630.3" cy="498.0" r="1.0"/><circle cx="348.5" cy="300.6" r="1.7"/><circle cx="435.4" cy="313.7" r="1.8"/><circle cx="701.1" cy="511.5" r="0.9"/><circle cx="451.6" cy="429.2" r="1.4"/><circle cx="438.7" cy="625.1" r="1.2"/><circle cx="430.6" cy="626.6" r="1.0"/><circle cx="325.5" cy="398.8" r="1.4"/><circle cx="411.8" cy="446.8" r="1.2"/><circle cx="363.8" cy="405.8" r="1.0"/><circle cx="553.6" cy="542.7" r="1.3"/><circle cx="704.8" cy="401.9" r="1.9"/><circle cx="389.6" cy="532.4" r="0.8"/><circle cx="685.8" cy="597.9" r="1.3"/><circle cx="542.9" cy="575.6" r="1.4"/><circle cx="577.3" cy="598.2" r="1.3"/><circle cx="424.3" cy="262.2" r="1.3"/><circle cx="370.3" cy="576.0" r="1.2"/><circle cx="595.5" cy="515.5" r="0.8"/><circle cx="669.6" cy="541.8" r="1.2"/><circle cx="433.9" cy="279.0" r="1.7"/><circle cx="538.4" cy="399.2" r="1.6"/><circle cx="656.3" cy="490.6" r="0.8"/><circle cx="456.5" cy="471.4" r="0.8"/><circle cx="441.1" cy="512.1" r="1.3"/><circle cx="450.6" cy="451.4" r="1.1"/><circle cx="376.2" cy="598.5" r="1.5"/><circle cx="679.2" cy="627.6" r="1.0"/><circle cx="415.6" cy="618.8" r="1.2"/><circle cx="382.3" cy="569.9" r="1.4"/><circle cx="535.0" cy="259.7" r="1.4"/><circle cx="519.7" cy="367.8" r="1.3"/><circle cx="461.5" cy="577.7" r="1.3"/><circle cx="633.0" cy="601.6" r="1.0"/><circle cx="494.7" cy="639.5" r="1.0"/><circle cx="509.9" cy="357.3" r="1.1"/><circle cx="432.7" cy="353.6" r="1.1"/><circle cx="486.3" cy="622.9" r="1.4"/><circle cx="597.5" cy="606.2" r="1.2"/><circle cx="519.8" cy="543.5" r="1.0"/><circle cx="346.2" cy="611.4" r="1.1"/><circle cx="455.0" cy="467.4" r="0.9"/><circle cx="755.5" cy="425.5" r="1.1"/><circle cx="364.2" cy="383.4" r="1.2"/><circle cx="648.9" cy="411.0" r="1.5"/><circle cx="487.8" cy="381.9" r="1.2"/><circle cx="597.0" cy="586.5" r="1.0"/><circle cx="432.3" cy="405.9" r="1.9"/><circle cx="691.6" cy="590.4" r="0.8"/><circle cx="631.5" cy="599.3" r="1.2"/><circle cx="432.3" cy="292.5" r="1.5"/><circle cx="619.7" cy="617.2" r="1.3"/><circle cx="655.4" cy="428.4" r="1.0"/><circle cx="603.9" cy="368.5" r="1.2"/><circle cx="599.9" cy="522.4" r="0.8"/><circle cx="551.6" cy="477.3" r="0.9"/><circle cx="584.7" cy="254.1" r="1.4"/><circle cx="530.3" cy="341.6" r="1.9"/><circle cx="629.4" cy="369.9" r="1.4"/><circle cx="616.4" cy="413.8" r="1.6"/><circle cx="724.7" cy="338.4" r="1.3"/><circle cx="506.7" cy="516.2" r="1.4"/><circle cx="644.3" cy="446.9" r="1.9"/><circle cx="459.7" cy="569.8" r="0.9"/><circle cx="539.2" cy="323.1" r="1.4"/><circle cx="612.4" cy="620.0" r="1.1"/><circle cx="417.0" cy="629.9" r="0.8"/><circle cx="727.4" cy="378.4" r="1.9"/><circle cx="488.6" cy="395.8" r="1.1"/><circle cx="326.2" cy="359.1" r="1.9"/><circle cx="378.4" cy="626.1" r="1.0"/><circle cx="679.9" cy="570.6" r="0.8"/><circle cx="656.2" cy="265.9" r="1.0"/><circle cx="713.2" cy="382.2" r="1.9"/><circle cx="461.7" cy="357.5" r="1.7"/><circle cx="335.5" cy="341.2" r="1.9"/><circle cx="737.1" cy="400.7" r="1.4"/><circle cx="538.2" cy="612.0" r="1.4"/><circle cx="644.0" cy="570.9" r="1.2"/><circle cx="466.6" cy="374.6" r="1.7"/><circle cx="431.8" cy="275.2" r="1.5"/><circle cx="465.7" cy="632.3" r="1.5"/><circle cx="439.4" cy="282.8" r="1.4"/><circle cx="631.6" cy="424.3" r="1.4"/><circle cx="593.0" cy="512.9" r="1.4"/><circle cx="451.9" cy="471.1" r="1.3"/><circle cx="411.1" cy="346.5" r="1.1"/><circle cx="707.0" cy="475.5" r="1.1"/><circle cx="753.7" cy="447.9" r="1.7"/><circle cx="607.2" cy="636.5" r="1.1"/><circle cx="342.4" cy="364.5" r="1.1"/><circle cx="485.8" cy="587.8" r="1.0"/><circle cx="661.0" cy="618.8" r="1.2"/><circle cx="592.8" cy="334.9" r="1.1"/><circle cx="606.5" cy="329.3" r="1.3"/><circle cx="618.0" cy="322.2" r="1.2"/><circle cx="668.6" cy="463.7" r="0.8"/><circle cx="495.8" cy="464.6" r="0.8"/><circle cx="395.7" cy="521.2" r="1.0"/><circle cx="457.9" cy="621.7" r="1.2"/><circle cx="755.5" cy="391.9" r="1.7"/><circle cx="508.1" cy="569.9" r="1.4"/><circle cx="524.1" cy="313.4" r="1.5"/><circle cx="601.8" cy="604.8" r="1.2"/><circle cx="485.2" cy="446.7" r="1.2"/><circle cx="550.1" cy="610.9" r="1.1"/><circle cx="672.7" cy="627.1" r="0.9"/><circle cx="732.4" cy="630.5" r="0.8"/><circle cx="593.0" cy="571.6" r="1.4"/><circle cx="683.2" cy="321.4" r="1.3"/><circle cx="548.7" cy="399.6" r="1.2"/><circle cx="638.1" cy="599.9" r="1.2"/><circle cx="375.9" cy="483.8" r="1.2"/><circle cx="457.3" cy="413.8" r="1.4"/><circle cx="609.6" cy="424.2" r="1.0"/><circle cx="592.4" cy="440.9" r="1.7"/><circle cx="661.9" cy="428.7" r="1.4"/><circle cx="371.3" cy="300.1" r="1.0"/><circle cx="515.9" cy="449.0" r="1.6"/><circle cx="360.5" cy="536.1" r="1.1"/><circle cx="348.4" cy="446.5" r="1.9"/><circle cx="641.3" cy="567.8" r="1.5"/><circle cx="537.5" cy="623.1" r="0.9"/><circle cx="665.6" cy="612.9" r="1.0"/><circle cx="443.8" cy="568.1" r="1.1"/><circle cx="722.4" cy="331.2" r="1.4"/><circle cx="462.8" cy="264.4" r="1.1"/><circle cx="397.9" cy="556.1" r="1.2"/><circle cx="370.2" cy="637.3" r="1.1"/><circle cx="345.9" cy="569.7" r="1.2"/><circle cx="750.1" cy="478.5" r="1.0"/><circle cx="325.8" cy="263.2" r="1.6"/><circle cx="370.9" cy="389.3" r="1.5"/><circle cx="430.2" cy="308.2" r="1.6"/><circle cx="701.4" cy="555.0" r="1.0"/><circle cx="330.0" cy="501.5" r="1.0"/><circle cx="344.0" cy="457.3" r="0.9"/><circle cx="350.2" cy="553.8" r="1.2"/><circle cx="731.5" cy="305.5" r="1.5"/><circle cx="400.4" cy="370.7" r="1.0"/><circle cx="709.2" cy="555.4" r="0.8"/><circle cx="689.8" cy="540.6" r="1.3"/><circle cx="520.5" cy="338.1" r="1.2"/><circle cx="625.3" cy="579.7" r="1.0"/><circle cx="331.6" cy="351.5" r="1.7"/><circle cx="733.1" cy="541.0" r="1.4"/><circle cx="597.5" cy="520.2" r="1.5"/><circle cx="527.8" cy="577.5" r="1.4"/><circle cx="513.9" cy="532.6" r="1.0"/><circle cx="416.6" cy="492.8" r="1.5"/><circle cx="387.5" cy="260.5" r="1.9"/><circle cx="474.0" cy="305.3" r="1.0"/><circle cx="624.2" cy="497.2" r="1.3"/><circle cx="353.4" cy="480.3" r="1.4"/><circle cx="679.1" cy="597.6" r="1.4"/><circle cx="720.0" cy="618.3" r="0.9"/><circle cx="597.8" cy="362.1" r="1.1"/><circle cx="652.2" cy="329.9" r="1.4"/><circle cx="334.0" cy="350.1" r="1.6"/><circle cx="542.6" cy="582.0" r="0.8"/><circle cx="474.8" cy="524.8" r="0.9"/><circle cx="398.6" cy="250.5" r="1.7"/><circle cx="537.3" cy="560.7" r="1.1"/><circle cx="475.0" cy="574.4" r="1.5"/><circle cx="359.9" cy="557.3" r="1.4"/><circle cx="596.3" cy="388.7" r="1.3"/><circle cx="335.9" cy="330.4" r="1.8"/><circle cx="425.9" cy="429.8" r="1.7"/><circle cx="650.3" cy="502.1" r="1.0"/><circle cx="392.1" cy="578.8" r="1.3"/><circle cx="707.4" cy="342.8" r="1.2"/><circle cx="628.8" cy="579.0" r="0.9"/><circle cx="432.0" cy="377.4" r="1.1"/><circle cx="668.4" cy="536.0" r="0.9"/><circle cx="600.6" cy="291.7" r="1.3"/><circle cx="624.6" cy="445.2" r="1.4"/><circle cx="386.3" cy="485.4" r="1.3"/><circle cx="717.3" cy="417.7" r="1.7"/><circle cx="705.2" cy="551.9" r="1.4"/><circle cx="618.6" cy="500.2" r="1.0"/><circle cx="663.0" cy="528.1" r="1.0"/><circle cx="508.0" cy="427.5" r="1.4"/><circle cx="616.7" cy="612.8" r="1.3"/><circle cx="661.2" cy="401.6" r="1.9"/><circle cx="341.5" cy="461.9" r="1.4"/><circle cx="731.3" cy="452.5" r="1.2"/><circle cx="558.7" cy="529.7" r="1.2"/><circle cx="683.1" cy="453.5" r="1.5"/><circle cx="415.8" cy="516.9" r="1.3"/><circle cx="377.9" cy="633.9" r="0.8"/><circle cx="443.5" cy="405.9" r="1.4"/><circle cx="506.7" cy="522.3" r="1.0"/><circle cx="494.3" cy="332.7" r="1.7"/><circle cx="674.7" cy="497.4" r="1.2"/><circle cx="422.6" cy="625.9" r="1.2"/><circle cx="678.7" cy="568.3" r="1.0"/><circle cx="478.3" cy="581.8" r="1.0"/><circle cx="434.5" cy="416.2" r="1.0"/><circle cx="636.8" cy="359.7" r="1.2"/><circle cx="716.3" cy="555.8" r="1.4"/><circle cx="598.5" cy="255.8" r="1.9"/><circle cx="608.4" cy="347.5" r="1.1"/><circle cx="425.9" cy="552.8" r="0.9"/><circle cx="715.6" cy="558.8" r="1.4"/><circle cx="587.8" cy="554.7" r="1.4"/><circle cx="665.4" cy="577.1" r="1.3"/><circle cx="554.3" cy="539.3" r="1.4"/><circle cx="564.8" cy="353.2" r="1.1"/><circle cx="387.4" cy="441.6" r="1.5"/><circle cx="527.2" cy="469.4" r="1.4"/><circle cx="357.6" cy="498.4" r="0.8"/><circle cx="467.8" cy="632.9" r="1.1"/><circle cx="483.2" cy="435.1" r="1.7"/><circle cx="416.0" cy="419.7" r="1.5"/><circle cx="499.4" cy="446.5" r="1.4"/><circle cx="467.9" cy="373.7" r="1.5"/><circle cx="599.2" cy="555.8" r="1.3"/><circle cx="707.6" cy="462.7" r="1.0"/><circle cx="718.0" cy="488.6" r="1.2"/><circle cx="625.8" cy="482.6" r="0.9"/><circle cx="368.8" cy="320.7" r="1.7"/><circle cx="719.9" cy="505.7" r="1.4"/><circle cx="664.8" cy="469.2" r="1.0"/><circle cx="507.2" cy="374.2" r="1.6"/><circle cx="573.5" cy="608.3" r="0.8"/><circle cx="748.7" cy="435.4" r="1.1"/><circle cx="603.4" cy="332.8" r="1.0"/><circle cx="327.1" cy="516.7" r="1.5"/><circle cx="363.1" cy="589.1" r="0.8"/><circle cx="633.3" cy="583.6" r="0.8"/><circle cx="596.6" cy="526.6" r="1.5"/><circle cx="434.7" cy="626.1" r="0.8"/><circle cx="396.7" cy="585.8" r="0.8"/><circle cx="483.8" cy="474.2" r="1.3"/><circle cx="387.6" cy="561.0" r="1.3"/><circle cx="597.0" cy="413.0" r="1.7"/><circle cx="733.2" cy="556.0" r="1.0"/><circle cx="351.2" cy="629.8" r="1.4"/><circle cx="684.1" cy="484.4" r="1.1"/><circle cx="585.0" cy="599.5" r="1.0"/><circle cx="325.7" cy="352.6" r="1.5"/><circle cx="677.5" cy="596.1" r="1.4"/><circle cx="675.7" cy="588.2" r="1.0"/><circle cx="692.7" cy="564.7" r="1.5"/><circle cx="617.7" cy="431.5" r="1.2"/><circle cx="649.5" cy="558.7" r="0.8"/><circle cx="673.4" cy="551.1" r="1.2"/><circle cx="712.5" cy="595.2" r="1.1"/><circle cx="579.6" cy="323.8" r="1.1"/><circle cx="627.9" cy="391.5" r="1.3"/><circle cx="548.4" cy="308.1" r="1.9"/><circle cx="474.0" cy="452.6" r="0.8"/><circle cx="752.9" cy="587.8" r="1.2"/><circle cx="438.0" cy="553.9" r="1.5"/><circle cx="434.7" cy="264.8" r="1.1"/><circle cx="436.1" cy="470.1" r="1.5"/><circle cx="614.3" cy="403.3" r="1.1"/><circle cx="742.2" cy="636.8" r="0.8"/><circle cx="715.8" cy="576.5" r="1.4"/><circle cx="730.8" cy="514.0" r="1.2"/><circle cx="652.4" cy="291.1" r="1.2"/><circle cx="378.6" cy="437.7" r="1.2"/><circle cx="386.8" cy="514.3" r="1.3"/><circle cx="420.3" cy="614.3" r="1.4"/><circle cx="385.4" cy="424.4" r="1.9"/><circle cx="688.9" cy="495.1" r="1.0"/><circle cx="680.6" cy="436.2" r="1.1"/><circle cx="440.1" cy="410.6" r="1.2"/><circle cx="687.7" cy="380.5" r="1.4"/><circle cx="462.4" cy="602.2" r="1.5"/><circle cx="349.6" cy="599.1" r="0.9"/><circle cx="531.3" cy="361.6" r="1.2"/><circle cx="724.6" cy="288.1" r="1.8"/><circle cx="349.8" cy="533.3" r="1.5"/><circle cx="331.9" cy="564.7" r="0.9"/><circle cx="325.8" cy="574.6" r="0.9"/><circle cx="513.0" cy="605.7" r="1.2"/><circle cx="632.4" cy="326.7" r="1.0"/><circle cx="587.9" cy="443.2" r="1.2"/><circle cx="576.8" cy="328.9" r="1.7"/><circle cx="501.3" cy="531.4" r="1.4"/><circle cx="469.8" cy="578.3" r="1.1"/><circle cx="331.7" cy="605.0" r="1.4"/><circle cx="483.6" cy="313.8" r="1.5"/><circle cx="327.0" cy="452.7" r="1.2"/><circle cx="489.8" cy="543.0" r="1.4"/><circle cx="737.2" cy="443.0" r="1.5"/><circle cx="421.6" cy="321.1" r="1.2"/><circle cx="678.0" cy="261.7" r="1.6"/><circle cx="369.4" cy="589.1" r="0.8"/><circle cx="378.2" cy="442.5" r="1.2"/><circle cx="377.7" cy="408.2" r="1.5"/><circle cx="730.0" cy="401.6" r="1.8"/><circle cx="660.6" cy="382.0" r="1.3"/><circle cx="513.2" cy="632.7" r="1.5"/><circle cx="677.1" cy="580.6" r="1.2"/><circle cx="738.8" cy="614.4" r="1.1"/><circle cx="598.3" cy="392.1" r="1.0"/><circle cx="512.1" cy="446.9" r="1.1"/><circle cx="439.8" cy="514.6" r="1.2"/><circle cx="724.3" cy="492.3" r="1.2"/><circle cx="512.4" cy="620.8" r="1.0"/><circle cx="738.0" cy="450.4" r="1.1"/><circle cx="555.6" cy="307.9" r="1.1"/><circle cx="451.8" cy="408.6" r="1.2"/><circle cx="588.5" cy="472.4" r="0.9"/><circle cx="631.9" cy="429.7" r="1.5"/><circle cx="527.6" cy="371.1" r="1.2"/><circle cx="546.4" cy="399.4" r="1.0"/><circle cx="477.3" cy="586.1" r="1.2"/><circle cx="452.7" cy="551.1" r="0.8"/><circle cx="701.4" cy="421.6" r="1.3"/><circle cx="515.0" cy="536.8" r="0.9"/><circle cx="739.4" cy="538.1" r="1.0"/><circle cx="477.3" cy="513.4" r="1.4"/><circle cx="646.1" cy="546.3" r="1.4"/><circle cx="631.1" cy="606.7" r="1.4"/><circle cx="326.9" cy="548.6" r="1.1"/><circle cx="740.9" cy="473.1" r="1.4"/><circle cx="702.0" cy="486.9" r="1.1"/><circle cx="522.8" cy="532.0" r="1.1"/><circle cx="564.9" cy="400.0" r="1.7"/><circle cx="692.0" cy="444.8" r="1.1"/><circle cx="464.9" cy="578.9" r="1.5"/><circle cx="539.8" cy="608.9" r="1.2"/><circle cx="756.3" cy="451.8" r="1.3"/><circle cx="476.7" cy="619.7" r="1.2"/><circle cx="367.8" cy="396.0" r="1.5"/><circle cx="535.3" cy="421.7" r="1.9"/><circle cx="681.8" cy="449.9" r="1.8"/><circle cx="708.7" cy="414.1" r="1.2"/><circle cx="546.0" cy="446.9" r="1.1"/><circle cx="597.2" cy="485.2" r="1.5"/><circle cx="578.2" cy="510.6" r="1.1"/><circle cx="554.6" cy="638.9" r="1.1"/><circle cx="371.1" cy="289.0" r="1.5"/><circle cx="464.5" cy="529.0" r="0.9"/><circle cx="576.5" cy="386.1" r="1.3"/><circle cx="348.6" cy="597.3" r="1.5"/><circle cx="514.9" cy="491.9" r="0.8"/><circle cx="727.1" cy="583.3" r="1.4"/><circle cx="534.3" cy="559.2" r="0.9"/><circle cx="450.6" cy="469.0" r="1.2"/><circle cx="491.6" cy="407.2" r="1.1"/><circle cx="681.8" cy="387.0" r="1.1"/><circle cx="447.5" cy="342.5" r="1.6"/><circle cx="672.7" cy="312.1" r="1.7"/><circle cx="493.2" cy="633.2" r="1.0"/><circle cx="399.8" cy="579.8" r="1.0"/><circle cx="573.3" cy="508.0" r="0.8"/><circle cx="430.8" cy="614.9" r="0.8"/><circle cx="496.2" cy="569.4" r="0.7"/><circle cx="391.4" cy="549.1" r="0.8"/><circle cx="644.5" cy="617.1" r="0.7"/><circle cx="602.2" cy="504.5" r="0.9"/><circle cx="483.8" cy="563.3" r="0.6"/><circle cx="696.8" cy="585.6" r="0.6"/><circle cx="365.2" cy="464.3" r="0.7"/><circle cx="566.7" cy="581.9" r="0.8"/><circle cx="610.0" cy="504.0" r="0.9"/><circle cx="645.1" cy="490.7" r="0.9"/><circle cx="392.3" cy="597.8" r="1.0"/><circle cx="499.6" cy="588.5" r="0.7"/><circle cx="384.2" cy="630.6" r="1.0"/><circle cx="612.8" cy="586.6" r="0.9"/><circle cx="398.5" cy="591.5" r="0.9"/><circle cx="718.4" cy="565.2" r="0.7"/><circle cx="372.6" cy="505.9" r="0.7"/><circle cx="604.7" cy="480.4" r="0.8"/><circle cx="519.1" cy="628.4" r="0.7"/><circle cx="476.8" cy="602.9" r="0.9"/><circle cx="414.3" cy="571.3" r="0.8"/><circle cx="641.1" cy="606.2" r="0.7"/><circle cx="487.0" cy="473.8" r="0.7"/><circle cx="424.9" cy="578.7" r="0.6"/><circle cx="473.3" cy="529.4" r="0.7"/><circle cx="722.5" cy="549.5" r="0.8"/><circle cx="353.2" cy="624.9" r="0.9"/><circle cx="705.4" cy="568.4" r="0.7"/><circle cx="669.0" cy="492.8" r="0.9"/><circle cx="671.4" cy="626.5" r="0.9"/><circle cx="665.5" cy="587.4" r="0.7"/><circle cx="663.6" cy="497.9" r="0.8"/><circle cx="490.3" cy="606.3" r="0.6"/><circle cx="565.4" cy="563.2" r="0.9"/><circle cx="694.0" cy="630.3" r="0.8"/><circle cx="380.5" cy="575.9" r="0.8"/><circle cx="718.5" cy="449.0" r="0.8"/><circle cx="422.5" cy="583.3" r="0.9"/><circle cx="675.0" cy="596.8" r="0.7"/><circle cx="601.4" cy="539.1" r="0.7"/><circle cx="516.7" cy="571.2" r="1.0"/><circle cx="564.1" cy="503.8" r="0.6"/><circle cx="695.3" cy="613.5" r="1.0"/><circle cx="585.6" cy="602.0" r="0.9"/><circle cx="712.1" cy="531.9" r="0.7"/><circle cx="480.5" cy="617.6" r="0.7"/><circle cx="607.9" cy="524.8" r="0.9"/><circle cx="491.4" cy="553.1" r="0.8"/><circle cx="564.6" cy="514.0" r="0.7"/><circle cx="688.2" cy="546.2" r="0.9"/><circle cx="445.6" cy="533.7" r="0.7"/><circle cx="559.2" cy="581.5" r="0.6"/><circle cx="726.4" cy="583.0" r="0.9"/><circle cx="564.0" cy="594.3" r="0.9"/><circle cx="355.8" cy="556.0" r="0.7"/><circle cx="586.0" cy="614.9" r="1.0"/><circle cx="479.7" cy="591.9" r="0.9"/><circle cx="710.3" cy="583.0" r="0.8"/><circle cx="392.9" cy="626.2" r="0.7"/><circle cx="570.9" cy="454.1" r="0.6"/><circle cx="460.2" cy="575.7" r="0.7"/><circle cx="682.7" cy="544.1" r="0.9"/><circle cx="661.0" cy="574.1" r="0.8"/><circle cx="410.1" cy="609.2" r="0.9"/><circle cx="432.2" cy="619.5" r="0.6"/><circle cx="414.5" cy="506.5" r="0.8"/><circle cx="497.4" cy="505.0" r="0.8"/><circle cx="605.0" cy="487.8" r="0.8"/><circle cx="449.6" cy="550.6" r="1.0"/><circle cx="642.9" cy="614.9" r="0.9"/><circle cx="591.2" cy="506.9" r="0.9"/><circle cx="681.7" cy="629.0" r="0.7"/><circle cx="640.1" cy="586.8" r="0.9"/><circle cx="483.2" cy="546.8" r="0.6"/><circle cx="533.0" cy="507.9" r="0.7"/><circle cx="482.7" cy="458.8" r="0.9"/><circle cx="522.2" cy="524.4" r="0.7"/><circle cx="467.2" cy="584.1" r="1.0"/><circle cx="479.4" cy="625.3" r="0.6"/><circle cx="485.7" cy="594.2" r="0.9"/><circle cx="454.8" cy="484.6" r="0.7"/><circle cx="451.9" cy="579.3" r="0.8"/><circle cx="716.0" cy="557.4" r="0.9"/><circle cx="682.7" cy="502.3" r="0.7"/><circle cx="554.0" cy="615.6" r="1.0"/><circle cx="367.3" cy="562.8" r="0.8"/><circle cx="355.2" cy="626.2" r="1.0"/><circle cx="371.3" cy="560.2" r="0.7"/><circle cx="385.5" cy="463.1" r="0.9"/><circle cx="384.1" cy="602.6" r="0.8"/><circle cx="573.6" cy="547.7" r="0.8"/><circle cx="475.7" cy="587.1" r="0.9"/><circle cx="640.1" cy="594.5" r="0.9"/><circle cx="721.4" cy="526.1" r="0.8"/><circle cx="707.6" cy="458.0" r="0.8"/><circle cx="599.0" cy="594.1" r="1.0"/><circle cx="436.7" cy="590.4" r="0.6"/><circle cx="488.9" cy="461.7" r="0.9"/><circle cx="700.2" cy="464.4" r="0.9"/><circle cx="442.2" cy="638.3" r="0.9"/><circle cx="480.8" cy="599.7" r="0.7"/><circle cx="374.9" cy="566.8" r="0.9"/><circle cx="372.8" cy="549.6" r="1.0"/><circle cx="709.1" cy="563.0" r="0.7"/><circle cx="449.7" cy="522.0" r="0.7"/><circle cx="638.5" cy="566.3" r="1.0"/><circle cx="432.3" cy="550.7" r="0.9"/><circle cx="662.7" cy="489.9" r="0.8"/><circle cx="577.1" cy="526.0" r="1.0"/><circle cx="429.7" cy="617.3" r="0.9"/><circle cx="728.0" cy="493.1" r="0.6"/><circle cx="407.3" cy="586.0" r="0.7"/><circle cx="699.0" cy="581.9" r="1.0"/><circle cx="438.0" cy="521.3" r="0.6"/><circle cx="395.8" cy="533.3" r="0.8"/><circle cx="418.0" cy="575.3" r="0.9"/><circle cx="538.6" cy="624.8" r="0.7"/><circle cx="717.7" cy="617.2" r="0.7"/><circle cx="417.3" cy="486.1" r="0.6"/><circle cx="543.3" cy="516.5" r="0.7"/><circle cx="354.0" cy="575.9" r="0.8"/><circle cx="682.1" cy="582.2" r="0.7"/><circle cx="509.3" cy="636.3" r="0.8"/><circle cx="446.8" cy="559.5" r="0.7"/><circle cx="647.9" cy="622.6" r="0.9"/><circle cx="473.3" cy="567.0" r="0.7"/><circle cx="674.3" cy="538.1" r="1.0"/><circle cx="439.1" cy="563.5" r="0.8"/><circle cx="620.6" cy="513.4" r="0.8"/><circle cx="450.7" cy="622.7" r="0.9"/><circle cx="548.4" cy="531.0" r="0.7"/><circle cx="702.4" cy="542.1" r="0.8"/><circle cx="659.1" cy="480.6" r="0.9"/><circle cx="524.9" cy="565.8" r="1.0"/><circle cx="666.2" cy="603.4" r="0.7"/><circle cx="655.2" cy="540.5" r="0.6"/><circle cx="500.3" cy="641.4" r="0.8"/><circle cx="531.8" cy="599.2" r="0.7"/><circle cx="440.3" cy="508.6" r="0.8"/><circle cx="454.3" cy="498.7" r="0.9"/><circle cx="384.7" cy="564.9" r="0.7"/><circle cx="510.8" cy="598.0" r="0.7"/><circle cx="366.7" cy="523.8" r="0.9"/><circle cx="658.1" cy="504.7" r="0.8"/><circle cx="494.2" cy="541.5" r="1.0"/><circle cx="517.1" cy="534.1" r="0.9"/><circle cx="604.7" cy="587.0" r="0.6"/><circle cx="608.3" cy="547.4" r="0.9"/><circle cx="394.9" cy="476.8" r="0.9"/><circle cx="620.2" cy="532.4" r="0.9"/><circle cx="660.4" cy="614.8" r="0.7"/><circle cx="454.4" cy="485.6" r="0.7"/><circle cx="676.4" cy="547.8" r="0.8"/><circle cx="654.7" cy="611.6" r="0.7"/><circle cx="369.8" cy="543.8" r="0.8"/><circle cx="535.8" cy="553.8" r="0.9"/><circle cx="426.1" cy="624.9" r="0.6"/><circle cx="469.4" cy="543.0" r="0.8"/><circle cx="460.8" cy="580.6" r="0.8"/><circle cx="522.8" cy="628.2" r="1.0"/><circle cx="368.6" cy="612.9" r="0.8"/><circle cx="418.5" cy="625.5" r="0.9"/><circle cx="539.3" cy="572.9" r="0.7"/><circle cx="430.2" cy="607.7" r="1.0"/><circle cx="428.6" cy="451.4" r="0.9"/><circle cx="447.9" cy="622.0" r="0.7"/><circle cx="371.5" cy="577.5" r="0.9"/><circle cx="471.1" cy="548.8" r="1.0"/><circle cx="473.3" cy="608.4" r="0.9"/><circle cx="722.4" cy="513.0" r="0.8"/><circle cx="513.3" cy="573.9" r="0.9"/><circle cx="396.4" cy="625.7" r="1.0"/><circle cx="550.0" cy="491.6" r="0.9"/><circle cx="538.7" cy="627.1" r="0.8"/><circle cx="678.3" cy="556.7" r="0.6"/><circle cx="480.8" cy="630.2" r="0.6"/><circle cx="476.6" cy="525.3" r="0.9"/><circle cx="418.0" cy="597.0" r="0.6"/><circle cx="649.4" cy="556.3" r="0.6"/><circle cx="400.1" cy="552.5" r="0.7"/><circle cx="602.0" cy="464.7" r="1.0"/><circle cx="476.0" cy="608.6" r="0.8"/><circle cx="394.5" cy="535.2" r="0.6"/><circle cx="542.6" cy="507.8" r="0.8"/><circle cx="355.7" cy="630.0" r="0.9"/><circle cx="566.8" cy="576.1" r="0.9"/><circle cx="408.4" cy="486.0" r="0.8"/><circle cx="382.0" cy="552.6" r="0.8"/><circle cx="647.9" cy="580.7" r="0.7"/><circle cx="577.7" cy="638.4" r="0.8"/><circle cx="612.9" cy="602.7" r="0.9"/><circle cx="525.5" cy="625.2" r="1.0"/><circle cx="506.5" cy="516.3" r="0.7"/><circle cx="628.8" cy="573.9" r="0.7"/><circle cx="403.3" cy="472.0" r="0.7"/><circle cx="720.9" cy="641.4" r="0.8"/><circle cx="539.0" cy="595.2" r="0.9"/><circle cx="671.4" cy="596.8" r="0.9"/><circle cx="605.6" cy="588.1" r="0.9"/><circle cx="706.1" cy="621.8" r="0.9"/><circle cx="654.8" cy="555.2" r="0.9"/><circle cx="648.1" cy="614.6" r="1.0"/><circle cx="552.0" cy="630.5" r="1.0"/><circle cx="610.4" cy="580.6" r="0.9"/><circle cx="651.6" cy="574.8" r="0.9"/><circle cx="667.8" cy="598.1" r="0.8"/><circle cx="509.1" cy="558.2" r="0.7"/><circle cx="585.3" cy="491.9" r="0.7"/><circle cx="365.8" cy="604.5" r="0.7"/><circle cx="713.9" cy="506.8" r="1.0"/><circle cx="581.9" cy="619.5" r="0.8"/><circle cx="422.0" cy="606.1" r="0.8"/><circle cx="522.7" cy="601.6" r="0.7"/><circle cx="689.6" cy="571.3" r="0.8"/><circle cx="518.8" cy="633.1" r="0.9"/><circle cx="590.1" cy="509.7" r="0.9"/><circle cx="694.7" cy="535.6" r="1.0"/><circle cx="371.7" cy="607.0" r="0.8"/><circle cx="520.1" cy="589.2" r="0.9"/><circle cx="402.1" cy="632.0" r="0.7"/><circle cx="573.3" cy="552.3" r="0.8"/><circle cx="634.0" cy="566.0" r="0.9"/><circle cx="460.6" cy="545.4" r="1.0"/><circle cx="596.5" cy="600.6" r="0.8"/><circle cx="715.9" cy="580.5" r="0.7"/><circle cx="651.6" cy="503.6" r="0.8"/><circle cx="414.9" cy="496.1" r="0.7"/><circle cx="495.5" cy="635.0" r="0.7"/><circle cx="467.6" cy="630.1" r="0.7"/><circle cx="521.1" cy="607.5" r="0.9"/><circle cx="528.7" cy="548.5" r="0.9"/><circle cx="448.7" cy="593.5" r="0.9"/><circle cx="450.9" cy="481.6" r="0.8"/><circle cx="636.4" cy="573.8" r="0.9"/><circle cx="717.6" cy="564.4" r="0.9"/><circle cx="499.9" cy="629.4" r="0.7"/><circle cx="499.2" cy="600.8" r="0.7"/><circle cx="681.2" cy="542.7" r="0.9"/><circle cx="375.1" cy="517.6" r="0.9"/><circle cx="603.8" cy="552.5" r="0.8"/><circle cx="454.0" cy="609.1" r="0.9"/><circle cx="407.4" cy="572.4" r="0.8"/><circle cx="691.4" cy="620.5" r="0.9"/><circle cx="596.6" cy="616.3" r="0.9"/><circle cx="617.4" cy="559.8" r="0.6"/><circle cx="579.3" cy="604.7" r="0.7"/><circle cx="720.4" cy="600.0" r="0.9"/><circle cx="377.4" cy="607.8" r="0.6"/><circle cx="372.5" cy="524.5" r="0.9"/><circle cx="365.1" cy="605.4" r="0.7"/><circle cx="589.2" cy="502.1" r="0.8"/><circle cx="432.8" cy="598.2" r="0.9"/><circle cx="657.3" cy="543.9" r="0.9"/><circle cx="360.8" cy="537.0" r="0.6"/><circle cx="589.4" cy="583.6" r="0.8"/><circle cx="544.6" cy="554.8" r="0.9"/><circle cx="728.4" cy="600.5" r="0.7"/><circle cx="619.2" cy="526.4" r="0.7"/><circle cx="503.1" cy="489.9" r="0.9"/><circle cx="546.2" cy="523.0" r="0.9"/><circle cx="616.5" cy="636.3" r="1.0"/><circle cx="699.6" cy="583.2" r="0.6"/><circle cx="624.4" cy="563.6" r="0.7"/><circle cx="485.0" cy="620.6" r="0.8"/><circle cx="696.5" cy="598.5" r="0.9"/><circle cx="543.0" cy="474.4" r="0.6"/><circle cx="695.4" cy="580.6" r="1.0"/><circle cx="516.0" cy="585.3" r="0.9"/><circle cx="669.7" cy="458.4" r="0.7"/><circle cx="572.4" cy="510.3" r="0.9"/><circle cx="648.7" cy="528.3" r="1.0"/></g><ellipse cx="452" cy="383" rx="46" ry="33" fill="url(#ahl)"/><ellipse cx="453" cy="382" rx="24" ry="16" fill="#fff4f2" opacity="0.900" filter="url(#ab3)"/></g></g><path d="M330,345 Q336,318 352,298 Q372,274 400,258 Q420,249 445,250" stroke="#fff" stroke-width="11" fill="none" opacity="0.750" filter="url(#ab3)"/><path d="M398,262 Q425,250 462,255" stroke="#fff" stroke-width="4.500" fill="none" opacity="0.700" filter="url(#ab2)"/><path d="M322,400 Q321,370 330,345" stroke="#fff" stroke-width="6" fill="none" opacity="0.500" filter="url(#ab3)"/><path d="M640,243 Q676,250 702,272 Q728,298 742,330" stroke="#c8a0a4" stroke-width="9" fill="none" opacity="0.450" filter="url(#ab3)"/><path d="M509,270 Q500,247 484.500,226 Q470,204 451,187" stroke="#67231b" stroke-width="8.400" fill="none" stroke-linecap="round"/><path d="M506.500,268 Q497.500,246.500 482,226 Q468,205.500 450,189.500" stroke="#a4483a" stroke-width="2.800" fill="none" stroke-linecap="round" opacity="0.850"/><path d="M439,191.500 Q442,181 453,179.500 Q461,181.500 463,190 Q456,193.500 450,194 Q444,195.500 439,191.500z" fill="#6a3026"/><path d="M442,189 Q446,182.500 455,182.500 Q458,184 458.500,187 Q450,187 442,189z" fill="#9a6a60" opacity="0.800"/><path d="M498,231.500 Q510,222 519.500,211" stroke="#b2c03c" stroke-width="3.200" fill="none" stroke-linecap="round"/><clipPath id="lclip"><path d="M519.0,211.0 C518.3,207.6 518.4,201.4 520.0,194.0 C521.6,186.6 524.0,174.9 528.8,166.7 C533.6,158.4 541.2,151.1 548.6,144.5 C556.0,137.9 564.3,131.9 573.4,127.0 C582.5,122.0 593.1,118.0 603.0,114.8 C612.9,111.6 623.6,108.8 632.7,107.9 C641.8,107.0 649.2,108.2 657.4,109.5 C665.6,110.8 675.4,113.5 682.0,116.0 C688.6,118.5 695.6,120.6 697.3,124.5 C699.0,128.4 695.4,133.8 692.0,139.5 C688.6,145.2 682.8,152.4 677.0,159.0 C671.2,165.6 664.8,173.2 657.4,179.0 C650.0,184.8 640.9,189.7 632.7,194.0 C624.5,198.3 616.3,201.9 608.0,205.0 C599.7,208.1 591.2,210.5 583.0,212.5 C574.8,214.5 566.3,216.4 558.5,217.0 C550.7,217.6 541.8,216.7 536.0,216.3 C530.2,215.9 526.8,215.4 524.0,214.5 C521.2,213.6 519.7,214.4 519.0,211.0Z"/></clipPath><path d="M519.0,211.0 C518.3,207.6 518.4,201.4 520.0,194.0 C521.6,186.6 524.0,174.9 528.8,166.7 C533.6,158.4 541.2,151.1 548.6,144.5 C556.0,137.9 564.3,131.9 573.4,127.0 C582.5,122.0 593.1,118.0 603.0,114.8 C612.9,111.6 623.6,108.8 632.7,107.9 C641.8,107.0 649.2,108.2 657.4,109.5 C665.6,110.8 675.4,113.5 682.0,116.0 C688.6,118.5 695.6,120.6 697.3,124.5 C699.0,128.4 695.4,133.8 692.0,139.5 C688.6,145.2 682.8,152.4 677.0,159.0 C671.2,165.6 664.8,173.2 657.4,179.0 C650.0,184.8 640.9,189.7 632.7,194.0 C624.5,198.3 616.3,201.9 608.0,205.0 C599.7,208.1 591.2,210.5 583.0,212.5 C574.8,214.5 566.3,216.4 558.5,217.0 C550.7,217.6 541.8,216.7 536.0,216.3 C530.2,215.9 526.8,215.4 524.0,214.5 C521.2,213.6 519.7,214.4 519.0,211.0Z" fill="url(#aleaf)"/><g clip-path="url(#lclip)"><path d="M519,211 Q593,165.500 697.500,124.500 L700,230 L515,230z" fill="url(#aleafL)"/><ellipse cx="600" cy="140" rx="60" ry="22" transform="rotate(-28 600 140)" fill="#2f7416" opacity="0.450" filter="url(#ab6)"/><ellipse cx="560" cy="212" rx="40" ry="5" transform="rotate(-6 560 212)" fill="#e8f4c8" opacity="0.550" filter="url(#ab2)"/><path d="M529.7,204.5 q2.3,-11.5 10.0,-16.9 M529.7,204.5 q10.7,3.8 17.6,2.3 M540.8,198.1 q2.8,-14.1 12.3,-20.7 M540.8,198.1 q13.2,4.7 21.7,2.8 M552.1,191.7 q3.4,-16.8 14.5,-24.6 M552.1,191.7 q15.7,5.6 25.7,3.4 M563.8,185.4 q3.9,-19.4 16.8,-28.5 M563.8,185.4 q18.1,6.5 29.8,3.9 M575.7,179.1 q4.4,-22.1 19.1,-32.4 M575.7,179.1 q20.6,7.4 33.8,4.4 M588.0,172.8 q4.9,-24.7 21.4,-36.2 M588.0,172.8 q23.1,8.2 37.9,4.9 M600.6,166.6 q4.7,-23.7 20.5,-34.7 M600.6,166.6 q22.1,7.9 36.3,4.7 M613.5,160.5 q4.2,-21.0 18.2,-30.8 M613.5,160.5 q19.6,7.0 32.2,4.2 M626.7,154.4 q3.7,-18.4 15.9,-26.9 M626.7,154.4 q17.1,6.1 28.2,3.7 M640.3,148.3 q3.1,-15.7 13.6,-23.1 M640.3,148.3 q14.7,5.2 24.1,3.1 M654.1,142.3 q2.6,-13.1 11.3,-19.2 M654.1,142.3 q12.2,4.4 20.1,2.6 M668.3,136.3 q2.1,-10.4 9.1,-15.3 M668.3,136.3 q9.7,3.5 16.0,2.1 M682.7,130.4 q1.6,-7.8 6.8,-11.4 M682.7,130.4 q7.3,2.6 12.0,1.6 " stroke="#a6d264" stroke-width="0.700" fill="none" opacity="0.650"/></g><path d="M519.0,211.0 C518.3,207.6 518.4,201.4 520.0,194.0 C521.6,186.6 524.0,174.9 528.8,166.7 C533.6,158.4 541.2,151.1 548.6,144.5 C556.0,137.9 564.3,131.9 573.4,127.0 C582.5,122.0 593.1,118.0 603.0,114.8 C612.9,111.6 623.6,108.8 632.7,107.9 C641.8,107.0 649.2,108.2 657.4,109.5 C665.6,110.8 675.4,113.5 682.0,116.0 C688.6,118.5 695.6,120.6 697.3,124.5 C699.0,128.4 695.4,133.8 692.0,139.5 C688.6,145.2 682.8,152.4 677.0,159.0 C671.2,165.6 664.8,173.2 657.4,179.0 C650.0,184.8 640.9,189.7 632.7,194.0 C624.5,198.3 616.3,201.9 608.0,205.0 C599.7,208.1 591.2,210.5 583.0,212.5 C574.8,214.5 566.3,216.4 558.5,217.0 C550.7,217.6 541.8,216.7 536.0,216.3 C530.2,215.9 526.8,215.4 524.0,214.5 C521.2,213.6 519.7,214.4 519.0,211.0Z" fill="none" stroke="#8cc034" stroke-width="1" opacity="0.700"/><path d="M519,211 Q593,165.500 697.500,124.500" stroke="#bcdc6c" stroke-width="1.500" fill="none"/></svg><div class="abs" style="left:1061px;top:62px;width:305px;height:13px;background:#424242"></div>
<div class="abs" style="left:1103px;top:75px;width:263px;height:27px;background:#424242"></div>
<div class="abs" style="left:1103px;top:75px;width:43px;height:27px;background:#535353"></div>
<div class="abs" style="left:1103px;top:207px;width:263px;height:3px;background:#3e3e3e"></div>
<div class="abs" style="left:1103px;top:210px;width:263px;height:27px;background:#424242"></div>
<div class="abs" style="left:1103px;top:210px;width:67px;height:27px;background:#535353"></div>
<div class="abs" style="left:1148px;top:110px;width:165px;height:91px;background:linear-gradient(to bottom,rgba(0,0,0,0),#000),linear-gradient(to right,#fff,#f00)"></div>
<div class="abs" style="left:1330px;top:110px;width:19px;height:91px;background:linear-gradient(to bottom,#ff0000 0%,#ff00ff 16.6%,#0000ff 33.3%,#00ffff 50%,#00ff00 66.6%,#ffff00 83.3%,#ff0000 100%)"></div>
<div class="abs" style="left:1134px;top:325px;width:216px;height:39px;background:#6b6b6b"></div>
<div class="abs" style="left:1103px;top:703px;width:263px;height:25px;background:#565656"></div>
<svg style="left:0;top:0" width="1366" height="728"><rect x="1063" y="114" width="37" height="2" fill="#424242"/><rect x="1063" y="155" width="37" height="2" fill="#424242"/><rect x="1063" y="196" width="37" height="2" fill="#424242"/><rect x="1072" y="78" width="1" height="3" fill="#484848"/><rect x="1074" y="78" width="1" height="3" fill="#484848"/><rect x="1076" y="78" width="1" height="3" fill="#484848"/><rect x="1078" y="78" width="1" height="3" fill="#484848"/><rect x="1080" y="78" width="1" height="3" fill="#484848"/><rect x="1082" y="78" width="1" height="3" fill="#484848"/><rect x="1084" y="78" width="1" height="3" fill="#484848"/><rect x="1086" y="78" width="1" height="3" fill="#484848"/><rect x="1088" y="78" width="1" height="3" fill="#484848"/><rect x="1090" y="78" width="1" height="3" fill="#484848"/><rect x="1072" y="119" width="1" height="3" fill="#484848"/><rect x="1074" y="119" width="1" height="3" fill="#484848"/><rect x="1076" y="119" width="1" height="3" fill="#484848"/><rect x="1078" y="119" width="1" height="3" fill="#484848"/><rect x="1080" y="119" width="1" height="3" fill="#484848"/><rect x="1082" y="119" width="1" height="3" fill="#484848"/><rect x="1084" y="119" width="1" height="3" fill="#484848"/><rect x="1086" y="119" width="1" height="3" fill="#484848"/><rect x="1088" y="119" width="1" height="3" fill="#484848"/><rect x="1090" y="119" width="1" height="3" fill="#484848"/><rect x="1072" y="160" width="1" height="3" fill="#484848"/><rect x="1074" y="160" width="1" height="3" fill="#484848"/><rect x="1076" y="160" width="1" height="3" fill="#484848"/><rect x="1078" y="160" width="1" height="3" fill="#484848"/><rect x="1080" y="160" width="1" height="3" fill="#484848"/><rect x="1082" y="160" width="1" height="3" fill="#484848"/><rect x="1084" y="160" width="1" height="3" fill="#484848"/><rect x="1086" y="160" width="1" height="3" fill="#484848"/><rect x="1088" y="160" width="1" height="3" fill="#484848"/><rect x="1090" y="160" width="1" height="3" fill="#484848"/><polygon points="1087,68.300 1090.400,65.500 1090.400,71.100" fill="#dcdcdc"/><polygon points="1091,68.300 1094.400,65.500 1094.400,71.100" fill="#dcdcdc"/><polygon points="1354.400,68.300 1351,65.500 1351,71.100" fill="#dcdcdc"/><polygon points="1358.400,68.300 1355,65.500 1355,71.100" fill="#dcdcdc"/><rect x="1076" y="91" width="4" height="4" fill="none" stroke="#dcdcdc" stroke-width="1"/><rect x="1076" y="97" width="4" height="4" fill="none" stroke="#dcdcdc" stroke-width="1"/><rect x="1075.500" y="102.500" width="5" height="5" fill="#dcdcdc"/><path d="M1084.500,105 q5,-3.500 3.500,-9.500 q-0.800,-2.500 -3,-3.500" stroke="#dcdcdc" stroke-width="2" fill="none"/><polygon points="1083,91.500 1089,90.500 1086,95.500" fill="#dcdcdc"/><path d="M1080,131.500 l4.500,2.300 v5.400 l-4.500,2.300 l-4.500,-2.300 v-5.400z M1075.500,133.800 l4.500,2.200 l4.500,-2.200 M1080,136 v5.500" stroke="#dcdcdc" stroke-width="1.100" fill="none"/><rect x="1086.500" y="131" width="4" height="4" fill="#dcdcdc"/><rect x="1086.500" y="136.500" width="4" height="4" fill="#dcdcdc"/><rect x="1075" y="143.500" width="15.500" height="3.500" fill="#dcdcdc"/><polygon points="1086.500,144.300 1089.500,144.300 1088,146.300" fill="#444"/><g stroke="#dcdcdc" stroke-width="1.200" fill="none"><path d="M1074,172.500 h8 l2,1.500 v10 h-10z"/><path d="M1086,177.500 h7 v11.500 h-8.500 v-4"/><path d="M1075,173.500 l16.500,14.500"/><path d="M1088,180.500 l3,4 M1091,180.500 v4"/></g><text x="1112" y="92.5" font-size="11.5" fill="#f2f2f2" font-weight="bold" font-style="normal" textLength="24" lengthAdjust="spacingAndGlyphs">Renk</text><text x="1154.5" y="92.5" font-size="11.5" fill="#a2a2a2" font-weight="bold" font-style="normal" textLength="70" lengthAdjust="spacingAndGlyphs">Renk Örnekleri</text><rect x="1349" y="85.3" width="10" height="1.300" fill="#d2d2d2"/><rect x="1349" y="88.3" width="10" height="1.300" fill="#d2d2d2"/><rect x="1349" y="91.3" width="10" height="1.300" fill="#d2d2d2"/><rect x="1122" y="123" width="19.500" height="19.500" fill="#fff"/><rect x="1111" y="112" width="21.500" height="21.500" fill="#1e1e1e"/><rect x="1112" y="113" width="19.500" height="19.500" fill="#fff"/><rect x="1113.300" y="114.300" width="16.900" height="16.900" fill="#000"/><path d="M1148.500,197.300 A3.600,3.600 0 0 1 1152,200.800" fill="none" stroke="#fff" stroke-width="1.100"/><polygon points="1320.500,196.800 1327.500,200.600 1320.500,204.400" fill="#f4f4f4" stroke="#555" stroke-width="0.600"/><text x="1112.5" y="227" font-size="11.5" fill="#f2f2f2" font-weight="bold" font-style="normal" textLength="47" lengthAdjust="spacingAndGlyphs">Katmanlar</text><text x="1179.5" y="227" font-size="11.5" fill="#a2a2a2" font-weight="bold" font-style="normal" textLength="37.5" lengthAdjust="spacingAndGlyphs">Kanallar</text><text x="1237" y="227" font-size="11.5" fill="#a2a2a2" font-weight="bold" font-style="normal" textLength="26.7" lengthAdjust="spacingAndGlyphs">Yollar</text><rect x="1349" y="220.3" width="10" height="1.300" fill="#d2d2d2"/><rect x="1349" y="223.3" width="10" height="1.300" fill="#d2d2d2"/><rect x="1349" y="226.3" width="10" height="1.300" fill="#d2d2d2"/><rect x="1107.500" y="247.500" width="94.500" height="16.500" rx="1" fill="#4b4b4b" stroke="#5e5e5e" stroke-width="0.800"/><circle cx="1121" cy="253.500" r="3" fill="none" stroke="#8a8a8a" stroke-width="1.300"/><path d="M1119,256 l-3.500,3.800" stroke="#8a8a8a" stroke-width="1.500"/><text x="1129" y="259.5" font-size="11.5" fill="#858585" font-weight="normal" font-style="normal" textLength="22" lengthAdjust="spacingAndGlyphs">Çeşit</text><path d="M1194,254 l2.500,2.500 l2.500,-2.500" stroke="#5f5f5f" stroke-width="1" fill="none"/><rect x="1222.300" y="250.200" width="11.500" height="9.800" fill="none" stroke="#b8b8b8" stroke-width="1.100"/><polygon points="1224,258.500 1227,254 1229,256.500 1230.300,255 1232.300,258.500" fill="#b8b8b8"/><circle cx="1252.600" cy="255.300" r="5.300" fill="none" stroke="#b8b8b8" stroke-width="1.100"/><path d="M1248.800,259 a5.300,5.300 0 0 1 7.500,-7.500z" fill="#b8b8b8"/><path d="M1271.500,250 h10.500 v3 h-1.100 q-0.200,-1.500 -1.400,-1.500 h-1.500 v7.800 q0,0.900 1.500,1 v1 h-5.500 v-1 q1.500,-0.100 1.500,-1 v-7.800 h-1.500 q-1.200,0 -1.400,1.500 h-1.100z" fill="#b8b8b8"/><rect x="1296" y="251" width="9.500" height="9" fill="none" stroke="#b8b8b8" stroke-width="1.100"/><rect x="1294.5" y="249.5" width="3" height="3" fill="#535353" stroke="#b8b8b8" stroke-width="0.900"/><rect x="1304.0" y="249.5" width="3" height="3" fill="#535353" stroke="#b8b8b8" stroke-width="0.900"/><rect x="1294.5" y="258.5" width="3" height="3" fill="#535353" stroke="#b8b8b8" stroke-width="0.900"/><rect x="1304.0" y="258.5" width="3" height="3" fill="#535353" stroke="#b8b8b8" stroke-width="0.900"/><path d="M1322.500,250 h5 l2.500,2.500 v8.500 h-7.500z" fill="none" stroke="#b8b8b8" stroke-width="1.100"/><rect x="1319.800" y="255.500" width="5.500" height="5.500" fill="#b8b8b8"/><rect x="1355.300" y="251" width="3" height="18" rx="1.500" fill="#474747"/><circle cx="1356.800" cy="251.300" r="4.200" fill="#8c8c8c"/><rect x="1107.500" y="275" width="154.500" height="15.500" rx="1" fill="#4e4e4e" stroke="#5e5e5e" stroke-width="0.800"/><text x="1114.6" y="286.2" font-size="11.5" fill="#808080" font-weight="normal" font-style="normal" textLength="31.5" lengthAdjust="spacingAndGlyphs">Normal</text><text x="1269.7" y="286.2" font-size="11.5" fill="#7d7d7d" font-weight="normal" font-style="normal" textLength="36" lengthAdjust="spacingAndGlyphs">Opaklık:</text><text x="1315" y="286.2" font-size="11" fill="#686868" font-weight="normal" font-style="normal" textLength="25" lengthAdjust="spacingAndGlyphs">100%</text><rect x="1308" y="291" width="52" height="1" fill="#5e5e5e"/><rect x="1103" y="296" width="263" height="1" fill="#4a4a4a"/><text x="1108.6" y="313.3" font-size="11.5" fill="#7d7d7d" font-weight="normal" font-style="normal" textLength="25.5" lengthAdjust="spacingAndGlyphs">Kilitle:</text><rect x="1146" y="304" width="11" height="11" fill="none" stroke="#b4b4b4" stroke-width="1.100"/><rect x="1147.3" y="305.3" width="2.700" height="2.700" fill="#b4b4b4"/><rect x="1147.3" y="311.1" width="2.700" height="2.700" fill="#b4b4b4"/><rect x="1150.2" y="308.2" width="2.700" height="2.700" fill="#b4b4b4"/><rect x="1153.1" y="305.3" width="2.700" height="2.700" fill="#b4b4b4"/><rect x="1153.1" y="311.1" width="2.700" height="2.700" fill="#b4b4b4"/><path d="M1179.500,303.500 l1.200,1.200 l-7,8 l-2.300,-2z" fill="#b4b4b4"/><path d="M1171,311.300 l2.200,2 q-1.500,3 -5.700,2.800 q2.200,-1.300 1.700,-3 q0.300,-1.800 1.800,-1.800z" fill="#b4b4b4"/><path d="M1190.6,309.6 H1200.6 M1195.6,304.6 V314.6" stroke="#b4b4b4" stroke-width="1.2000000000000002" fill="none"/><polygon points="1202.1,309.6 1199.54,307.52000000000004 1199.54,311.68" fill="#b4b4b4"/><polygon points="1189.1,309.6 1191.6599999999999,307.52000000000004 1191.6599999999999,311.68" fill="#b4b4b4"/><polygon points="1195.6,316.1 1193.52,313.54 1197.6799999999998,313.54" fill="#b4b4b4"/><polygon points="1195.6,303.1 1193.52,305.66 1197.6799999999998,305.66" fill="#b4b4b4"/><path d="M1214,303 v11 h11.500 M1210.500,306.500 h11 v11" stroke="#b4b4b4" stroke-width="1.100" fill="none" stroke-dasharray="2.500,1"/><path d="M1215,307.500 l6,6" stroke="#b4b4b4" stroke-width="1"/><rect x="1235" y="309" width="10" height="7.300" fill="#b4b4b4"/><path d="M1237.300,309 v-2 a2.700,2.700 0 0 1 5.400,0 v2" stroke="#b4b4b4" stroke-width="1.300" fill="none"/><rect x="1239.300" y="311.300" width="1.600" height="2.600" fill="#535353"/><text x="1276" y="313.3" font-size="11.5" fill="#7d7d7d" font-weight="normal" font-style="normal" textLength="29" lengthAdjust="spacingAndGlyphs">Dolgu:</text><text x="1315" y="313.3" font-size="11" fill="#686868" font-weight="normal" font-style="normal" textLength="25" lengthAdjust="spacingAndGlyphs">100%</text><rect x="1310" y="318.500" width="50" height="1" fill="#5e5e5e"/><path d="M1352.500,309 l2.500,2.500 l2.500,-2.500" stroke="#666" stroke-width="1" fill="none"/><rect x="1103" y="324" width="263" height="1" fill="#484848"/><rect x="1103" y="364" width="247" height="1" fill="#484848"/><path d="M1111.800,344.700 q6.500,-7.500 13,0 q-6.500,7.500 -13,0z" fill="#ececec"/><circle cx="1118.300" cy="344.500" r="2.700" fill="#535353"/><circle cx="1118.300" cy="344.500" r="1.200" fill="#ececec"/><rect x="1137" y="328" width="32" height="32" fill="#2a2a2a"/><rect x="1138" y="329" width="30" height="30" fill="#fff"/><defs><radialGradient id="tap" cx="0.38" cy="0.35" r="0.75"><stop offset="0" stop-color="#e0352f"/><stop offset="0.6" stop-color="#b3171a"/><stop offset="1" stop-color="#7d0d12"/></radialGradient></defs><path d="M1152.500,337.200 q4,-2 7.300,0.600 q4.200,3.600 2.200,10.500 q-1.600,6.200 -5.600,8 q-1.800,0.500 -3.700,0 q-1.900,0.600 -3.800,-0.100 q-4,-2 -5.500,-8 q-1.700,-7.200 2.500,-10.500 q3.300,-2.400 6.600,-0.500z" fill="url(#tap)"/><path d="M1152.700,337.800 l-1.800,-3.600" stroke="#6b2a16" stroke-width="0.900"/><path d="M1153.300,335 q2,-3.800 7.500,-3.600 q-1.800,4 -7.500,3.600z" fill="#5a9a28"/><text x="1179.5" y="349" font-size="11.5" fill="#f0f0f0" font-weight="normal" font-style="italic" textLength="42" lengthAdjust="spacingAndGlyphs">Arka Plan</text><rect x="1323.300" y="343.500" width="9.400" height="6.800" fill="none" stroke="#e8e8e8" stroke-width="1.200"/><path d="M1325.300,343.500 v-2 a2.700,2.700 0 0 1 5.400,0 v2" stroke="#e8e8e8" stroke-width="1.200" fill="none"/><rect x="1327.300" y="345.800" width="1.400" height="2.300" fill="#e8e8e8"/><g fill="none" stroke="#7a7a7a" stroke-width="1.400"><rect x="1162" y="711.800" width="8" height="5.400" rx="2.700"/><rect x="1168" y="711.800" width="8" height="5.400" rx="2.700"/></g><text x="1190.5" y="719" font-size="13" fill="#7a7a7a" font-weight="bold" font-style="italic" textLength="12" lengthAdjust="spacingAndGlyphs">fx</text><rect x="1216" y="709.500" width="13" height="10" fill="#c8c8c8"/><circle cx="1222.500" cy="714.500" r="2.900" fill="#4a4a4a"/><circle cx="1250.600" cy="714.800" r="5.200" fill="none" stroke="#c8c8c8" stroke-width="1.300"/><path d="M1246.900,718.500 a5.200,5.200 0 0 1 7.400,-7.400z" fill="#c8c8c8"/><polygon points="1257.500,722.500 1260.500,722.500 1259,724.300" fill="#c8c8c8"/><path d="M1270,710 h4.500 l1.200,1.500 h7.300 v8.500 h-13z" fill="#c8c8c8"/><path d="M1299.500,710 h9.500 v10 h-6 l-3.500,-3.500z" fill="none" stroke="#c8c8c8" stroke-width="1.300"/><path d="M1299.500,716.500 h3.500 v3.500" fill="#c8c8c8" stroke="#c8c8c8" stroke-width="0.800"/><g stroke="#7a7a7a" fill="none" stroke-width="1.200"><path d="M1325.500,711.500 h10.500 M1329,711.500 v-1.500 h3.500 v1.500 M1326.800,712 l0.600,8.500 h6.700 l0.600,-8.500"/><path d="M1329,713.500 v5.500 M1330.800,713.500 v5.500 M1332.600,713.500 v5.500" stroke-width="0.900"/></g><rect x="1364.500" y="29" width="1.500" height="699" fill="#434343"/></svg><svg style="left:0;top:728px" width="1366" height="40" viewBox="0 728 1366 40"><rect x="0" y="728" width="1366" height="40" fill="#03050c"/><rect x="392" y="728" width="48" height="38" fill="#2e3034"/><rect x="151" y="766" width="39.5" height="2" fill="#82bdea"/><rect x="200" y="766" width="40" height="2" fill="#82bdea"/><rect x="249" y="766" width="40" height="2" fill="#82bdea"/><rect x="298" y="766" width="39.5" height="2" fill="#82bdea"/><rect x="347" y="766" width="39" height="2" fill="#82bdea"/><rect x="392" y="766" width="48" height="2" fill="#82bdea"/><rect x="444.5" y="766" width="39.5" height="2" fill="#82bdea"/><polygon points="16,742.300 22.800,741.300 22.800,747.500 16,747.500" fill="#f4f4f4"/><polygon points="23.800,741.200 32,740 32,747.500 23.800,747.500" fill="#f4f4f4"/><polygon points="16,748.500 22.800,748.500 22.800,754.700 16,753.700" fill="#f4f4f4"/><polygon points="23.800,748.500 32,748.500 32,756 23.800,754.800" fill="#f4f4f4"/><circle cx="74.500" cy="745.800" r="5.200" fill="none" stroke="#f4f4f4" stroke-width="1.400"/><path d="M70.800,749.700 L64.300,756.300" stroke="#f4f4f4" stroke-width="1.500"/><rect x="114" y="741.300" width="12" height="13.300" fill="none" stroke="#f4f4f4" stroke-width="1.300"/><path d="M112.300,743.500 h-2 v9 h2 M127.700,743.500 h2 v9 h-2" stroke="#f4f4f4" stroke-width="1.300" fill="none"/><path d="M160.300,741.500 q0,-1.500 1.500,-1.500 h5 l1.800,1.800 h11.500 q1.500,0 1.500,1.500 v12.500 h-21.300z" fill="#f3d578"/><path d="M160.300,743.300 h21.300 v12.500 h-21.300z" fill="#f7df94"/><path d="M164.300,755.800 v-6.300 q0,-1 1,-1 h11.500 q1,0 1,1 v6.300 h-3.500 v-3.500 h-6.500 v3.500z" fill="#3a94dc"/><rect x="164.300" y="755.800" width="13.500" height="1.200" fill="#2d7fc4"/><defs><radialGradient id="ffx" cx="0.5" cy="0.4" r="0.6"><stop offset="0" stop-color="#3f9be0"/><stop offset="1" stop-color="#1a4f9a"/></radialGradient><linearGradient id="ffo" x1="0" y1="0" x2="0" y2="1"><stop offset="0" stop-color="#f8b13a"/><stop offset="0.5" stop-color="#f0681f"/><stop offset="1" stop-color="#d8401b"/></linearGradient></defs><circle cx="220" cy="747" r="9" fill="url(#ffx)"/><path d="M210.300,741.500 q-2.800,5.500 -0.500,11 q3,6.200 10.300,6.500 q7.500,-0.300 10.300,-7 q1.800,-5.300 -1.200,-10.300 q0.900,4.500 -1.300,7.800 q-2,3.600 -6,3.600 q-3.500,0 -4.800,-2 q2.300,0.600 4,-0.900 q-2.300,-0.300 -3,-2 q-0.600,-1.600 1,-2.300 l2.700,-0.300 q-1,-1.600 -3.300,-1.800 q-1.600,-2.300 -0.300,-5 q-3.300,1 -4.700,4.300 q-1.300,-0.600 -3.200,-1.600z" fill="url(#ffo)"/><path d="M228.300,740.500 q2.800,4 2.300,9 q-0.600,-4.600 -2.300,-9z" fill="#fbd14a"/><circle cx="269" cy="748" r="10.800" fill="#e8453c"/><path d="M269,748 L259.650,742.600 A10.800,10.800 0 0 0 269,758.800 L274.400,751.100z" fill="#2ea052"/><path d="M269,748 L274.400,751.100 L269,758.800 A10.800,10.800 0 0 0 278.350,742.600z" fill="#fbc016"/><path d="M259.650,742.600 A10.800,10.800 0 0 1 278.350,742.600 L269,742.600z" fill="#e8453c"/><circle cx="269" cy="748" r="5.200" fill="#f4f4f4"/><circle cx="269" cy="748" r="4" fill="#4a86ee"/><path d="M308.300,743.500 a6,6 0 0 1 8.500,-6 a10,10 0 0 1 11.500,11.500 a6,6 0 0 1 -8.500,8 a10,10 0 0 1 -11.800,-11.500 q0,-1 0.300,-2z" fill="#1aa3e2"/><text x="313" y="754.5" font-size="18.5" fill="#fff" font-weight="bold" font-style="normal" textLength="10.5" lengthAdjust="spacingAndGlyphs">S</text><polygon points="356,740 370,737 370,758.500 356,755.500" fill="#1f7a4b"/><rect x="368.500" y="739.800" width="9.500" height="16" fill="#fff" stroke="#1f7a4b" stroke-width="0.800"/><rect x="370.500" y="742.5" width="7" height="1.600" fill="#9fc9ae"/><rect x="370.500" y="745.5" width="7" height="1.600" fill="#9fc9ae"/><rect x="370.500" y="748.5" width="7" height="1.600" fill="#9fc9ae"/><rect x="370.500" y="751.5" width="7" height="1.600" fill="#9fc9ae"/><rect x="373.500" y="740" width="0.800" height="15.500" fill="#1f7a4b"/><polygon points="356,740 370,737 370,758.500 356,755.500" fill="#1f7a4b"/><path d="M359.500,743.800 l6.500,8.800 M366,743.800 l-6.500,8.800" stroke="#fff" stroke-width="2"/><rect x="405.700" y="737.200" width="20.300" height="19.600" fill="#0c1a33" stroke="#48a5e8" stroke-width="1.400"/><text x="410" y="752" font-size="12.5" fill="#5db6f5" font-weight="bold" font-style="normal" textLength="12" lengthAdjust="spacingAndGlyphs">Ps</text><polygon points="454,741.500 474,739.500 474,758.300 454,756.500" fill="#86b8d8"/><polygon points="471.500,739.800 474,739.500 474,758.300 471.500,758" fill="#b5d6ea"/><circle cx="463.500" cy="748.500" r="6.600" fill="#f07f22"/><circle cx="463.500" cy="748.500" r="5" fill="#f5963c"/><polygon points="461.300,744.800 467.300,748.500 461.300,752.200" fill="#fff"/><path d="M1157.500,751 L1163.300,745.300 L1169,751" stroke="#f4f4f4" stroke-width="1.400" fill="none"/><rect x="1183.500" y="745" width="10.800" height="6.300" fill="none" stroke="#f4f4f4" stroke-width="1.200"/><rect x="1185.300" y="746.500" width="7.500" height="3.300" fill="#f4f4f4"/><rect x="1194.800" y="746.800" width="1.200" height="2.800" fill="#f4f4f4"/><path d="M1180.500,742.300 v2 M1183,742.300 v2 M1179.500,744.500 h4.500 v1.500 q0,1.800 -2.200,1.800 q-2.300,0 -2.300,-1.800z M1181.700,748 v3 h2" stroke="#f4f4f4" stroke-width="1" fill="none"/><g fill="none" stroke="#f4f4f4" stroke-width="1.300"><path d="M1206.800,754 a11,11 0 0 1 11,-11" opacity="0.550"/><path d="M1209.800,754 a8,8 0 0 1 8,-8" opacity="0.700"/><path d="M1212.800,754 a5,5 0 0 1 5,-5"/></g><circle cx="1216.800" cy="753" r="1.500" fill="#f4f4f4"/><path d="M1227.500,746.300 h2.800 l3.500,-3.300 v11 l-3.500,-3.300 h-2.800z" fill="none" stroke="#f4f4f4" stroke-width="1.200"/><path d="M1236,745.300 q2,3.200 0,6.400 M1238.300,743.500 q3.200,5 0,10 " stroke="#f4f4f4" stroke-width="1.100" fill="none"/><path d="M1240.800,742 q4,6.500 0,13" stroke="#f4f4f4" stroke-width="1" fill="none" opacity="0.450"/><text x="1266" y="743" font-size="12" fill="#f4f4f4" font-weight="normal" font-style="normal" textLength="27" lengthAdjust="spacingAndGlyphs">16:07</text><text x="1253.5" y="760.5" font-size="12" fill="#f4f4f4" font-weight="normal" font-style="normal" textLength="53.5" lengthAdjust="spacingAndGlyphs">19.01.2017</text><path d="M1325.700,740.700 h15 v11.300 h-5.500 l-2,2.800 l-2,-2.800 h-5.500z" fill="none" stroke="#f4f4f4" stroke-width="1.300"/><rect x="1362.500" y="728" width="1" height="40" fill="#3a3d44"/></svg>
</body></html>
